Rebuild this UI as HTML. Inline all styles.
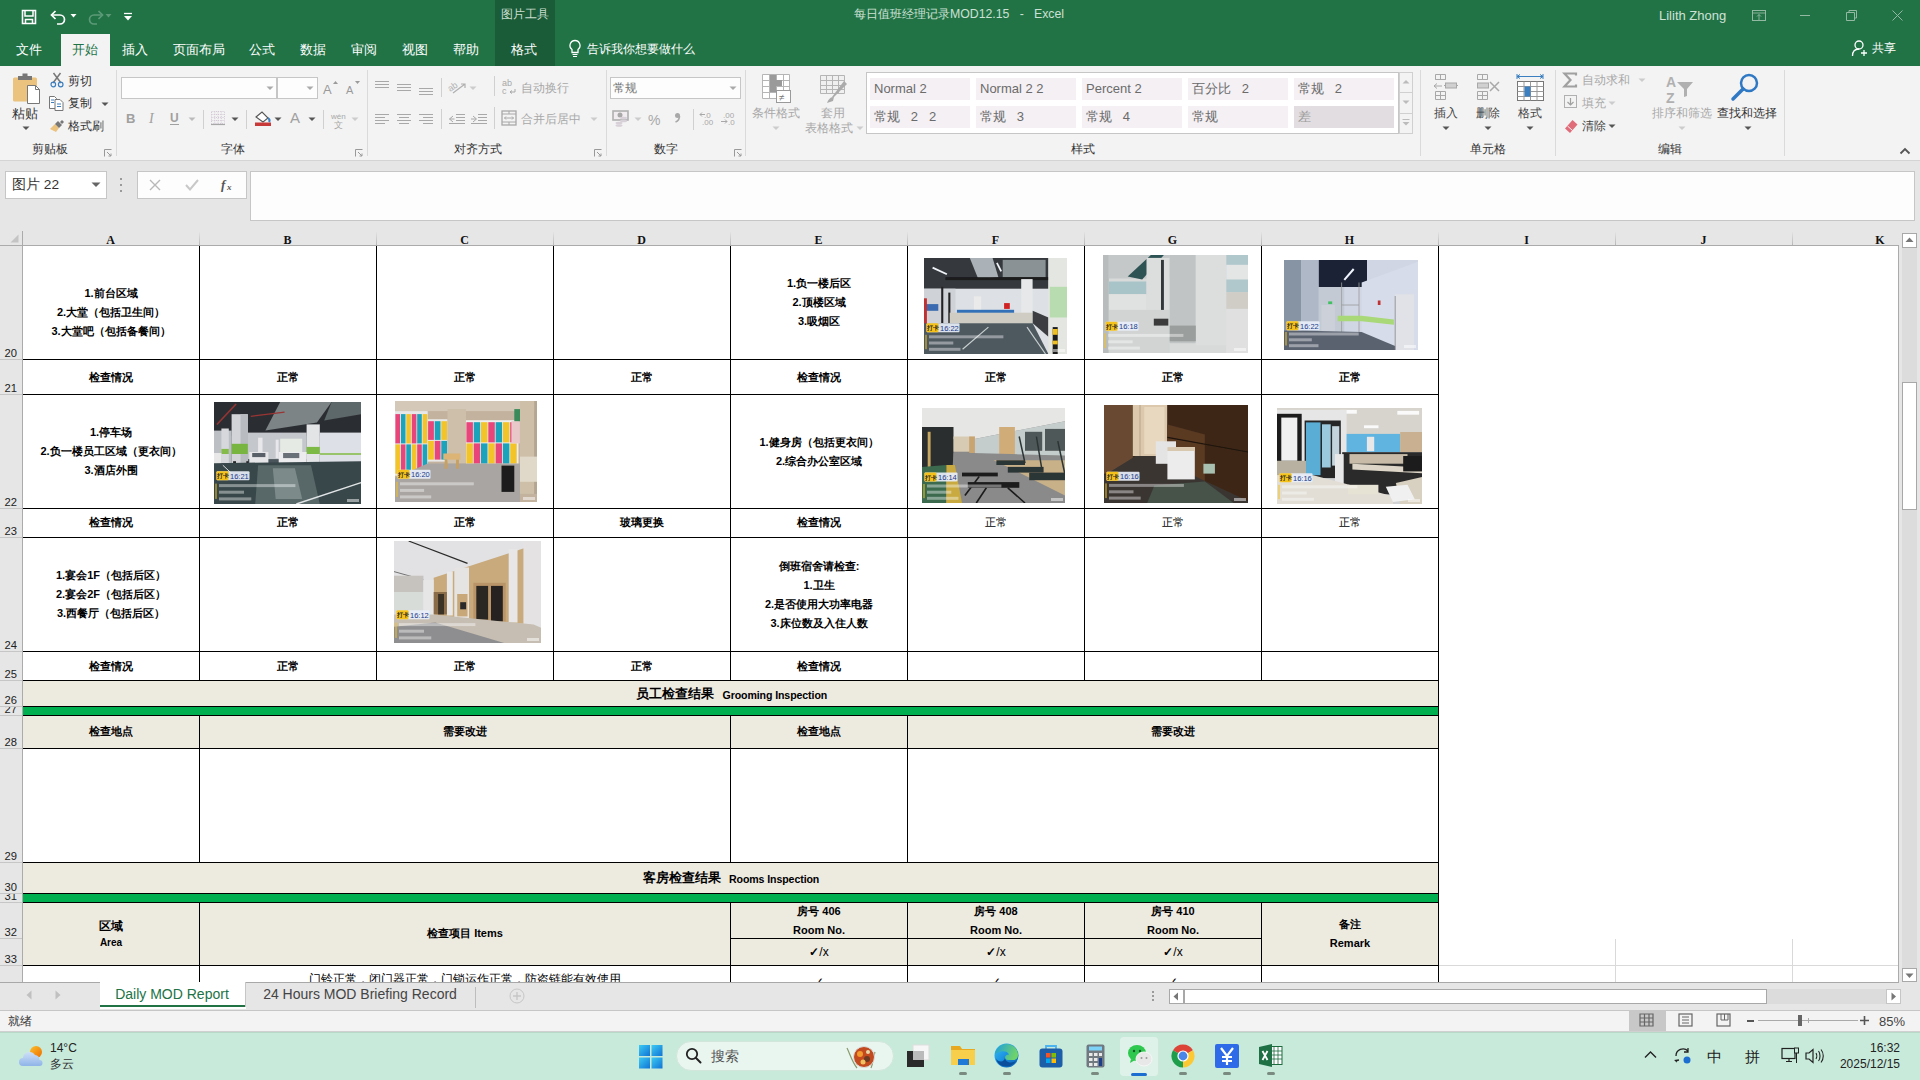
<!DOCTYPE html><html><head><meta charset="utf-8"><style>
html,body{margin:0;padding:0;width:1920px;height:1080px;overflow:hidden;background:#fff}
body>div,body div{position:absolute;box-sizing:border-box}
.t{white-space:nowrap;font-family:"Liberation Sans",sans-serif}
svg{overflow:visible}
</style></head><body>
<div style="left:0px;top:0px;width:1920px;height:66px;background:#217346"></div>
<div style="left:495px;top:0px;width:60px;height:66px;background:#1a5c38"></div>
<div class="t" style="left:225px;width:600px;text-align:center;top:6.0px;font-size:12px;line-height:16px;color:#c9dccf;font-weight:normal;">图片工具</div>
<div class="t" style="left:659px;width:600px;text-align:center;top:6.35px;font-size:12.3px;line-height:16.3px;color:#cde0d4;font-weight:normal;">每日值班经理记录MOD12.15&nbsp;&nbsp;&nbsp;-&nbsp;&nbsp;&nbsp;Excel</div>
<div class="t" style="left:1659px;top:6.5px;font-size:13px;line-height:17px;color:#cfe2d6;font-weight:normal;">Lilith Zhong</div>
<svg style="position:absolute;left:20px;top:8px;" width="18" height="18" viewBox="0 0 18 18"><path d="M2.5 2.5h13v13h-13z" fill="none" stroke="#fff" stroke-width="1.6"/><path d="M5 3v5h8V3" fill="none" stroke="#fff" stroke-width="1.5"/><path d="M5.5 15.5v-4h7v4" fill="none" stroke="#fff" stroke-width="1.5"/></svg>
<svg style="position:absolute;left:49px;top:9px;" width="20" height="16" viewBox="0 0 20 16"><path d="M3 6h8a4.5 4.5 0 0 1 0 9H8" fill="none" stroke="#fff" stroke-width="1.7"/><path d="M6.5 2L2.5 6l4 4" fill="none" stroke="#fff" stroke-width="1.7"/></svg>
<svg style="position:absolute;left:70px;top:13px;" width="8" height="6" viewBox="0 0 8 6"><path d="M0.5 1h6L3.5 4.5z" fill="#fff"/></svg>
<svg style="position:absolute;left:85px;top:9px;" width="20" height="16" viewBox="0 0 20 16"><path d="M17 6H9a4.5 4.5 0 0 0 0 9h3" fill="none" stroke="#5c9a77" stroke-width="1.7"/><path d="M13.5 2l4 4-4 4" fill="none" stroke="#5c9a77" stroke-width="1.7"/></svg>
<svg style="position:absolute;left:105px;top:13px;" width="8" height="6" viewBox="0 0 8 6"><path d="M0.5 1h6L3.5 4.5z" fill="#5c9a77"/></svg>
<svg style="position:absolute;left:123px;top:12px;" width="10" height="10" viewBox="0 0 10 10"><path d="M1 1.5h8" stroke="#fff" stroke-width="1.3"/><path d="M1 4h8L5 8.5z" fill="#fff"/></svg>
<svg style="position:absolute;left:1752px;top:10px;" width="14" height="11" viewBox="0 0 14 11"><rect x="0.5" y="0.5" width="13" height="10" fill="none" stroke="#93b9a2" stroke-width="1"/><path d="M0.5 3h13M7 4.5v6M5 6.5l2-2 2 2" fill="none" stroke="#93b9a2" stroke-width="0.9"/></svg>
<div style="left:1800px;top:15px;width:10px;height:1px;background:#93b9a2"></div>
<svg style="position:absolute;left:1846px;top:10px;" width="11" height="11" viewBox="0 0 11 11"><path d="M3 2.5V0.5h7.5v7.5H8.5M0.5 2.5h8v8h-8z" fill="none" stroke="#93b9a2" stroke-width="1"/></svg>
<svg style="position:absolute;left:1892px;top:10px;" width="11" height="11" viewBox="0 0 11 11"><path d="M0.5 0.5l10 10M10.5 0.5l-10 10" stroke="#93b9a2" stroke-width="1"/></svg>
<div style="left:61px;top:34px;width:49px;height:32px;background:#f3f3f3"></div>
<div class="t" style="left:-271px;width:600px;text-align:center;top:40.5px;font-size:13px;line-height:17px;color:#fff;font-weight:normal;">文件</div>
<div class="t" style="left:-215px;width:600px;text-align:center;top:40.5px;font-size:13px;line-height:17px;color:#217346;font-weight:normal;">开始</div>
<div class="t" style="left:-165px;width:600px;text-align:center;top:40.5px;font-size:13px;line-height:17px;color:#fff;font-weight:normal;">插入</div>
<div class="t" style="left:-101.5px;width:600px;text-align:center;top:40.5px;font-size:13px;line-height:17px;color:#fff;font-weight:normal;">页面布局</div>
<div class="t" style="left:-38px;width:600px;text-align:center;top:40.5px;font-size:13px;line-height:17px;color:#fff;font-weight:normal;">公式</div>
<div class="t" style="left:13px;width:600px;text-align:center;top:40.5px;font-size:13px;line-height:17px;color:#fff;font-weight:normal;">数据</div>
<div class="t" style="left:64px;width:600px;text-align:center;top:40.5px;font-size:13px;line-height:17px;color:#fff;font-weight:normal;">审阅</div>
<div class="t" style="left:115px;width:600px;text-align:center;top:40.5px;font-size:13px;line-height:17px;color:#fff;font-weight:normal;">视图</div>
<div class="t" style="left:166px;width:600px;text-align:center;top:40.5px;font-size:13px;line-height:17px;color:#fff;font-weight:normal;">帮助</div>
<div class="t" style="left:224px;width:600px;text-align:center;top:40.5px;font-size:13px;line-height:17px;color:#fff;font-weight:normal;">格式</div>
<svg style="position:absolute;left:568px;top:39px;" width="14" height="19" viewBox="0 0 14 19"><path d="M7 1.5a5 5 0 0 0-3 9v3h6v-3a5 5 0 0 0-3-9z" fill="none" stroke="#fff" stroke-width="1.3"/><path d="M4.5 15.5h5M5 17.5h4" stroke="#fff" stroke-width="1.2"/></svg>
<div class="t" style="left:587px;top:41.0px;font-size:12px;line-height:16px;color:#fff;font-weight:normal;">告诉我你想要做什么</div>
<svg style="position:absolute;left:1851px;top:39px;" width="18" height="18" viewBox="0 0 18 18"><circle cx="8" cy="6" r="4" fill="none" stroke="#fff" stroke-width="1.3"/><path d="M1.5 17c0-5 3-7 6.5-7" fill="none" stroke="#fff" stroke-width="1.3"/><path d="M13 11v6M10 14h6" stroke="#fff" stroke-width="1.3"/></svg>
<div class="t" style="left:1872px;top:40.0px;font-size:12px;line-height:16px;color:#fff;font-weight:normal;">共享</div>
<div style="left:0px;top:66px;width:1920px;height:94px;background:#f3f3f3"></div>
<div style="left:0px;top:160px;width:1920px;height:1px;background:#d4d4d4"></div>
<div style="left:116px;top:70px;width:1px;height:86px;background:#dadada"></div>
<div style="left:367px;top:70px;width:1px;height:86px;background:#dadada"></div>
<div style="left:606px;top:70px;width:1px;height:86px;background:#dadada"></div>
<div style="left:745px;top:70px;width:1px;height:86px;background:#dadada"></div>
<div style="left:1420px;top:70px;width:1px;height:86px;background:#dadada"></div>
<div style="left:1555px;top:70px;width:1px;height:86px;background:#dadada"></div>
<div style="left:1784px;top:70px;width:1px;height:86px;background:#dadada"></div>
<div class="t" style="left:-250px;width:600px;text-align:center;top:141.0px;font-size:12px;line-height:16px;color:#333;font-weight:normal;">剪贴板</div>
<div class="t" style="left:-67px;width:600px;text-align:center;top:141.0px;font-size:12px;line-height:16px;color:#333;font-weight:normal;">字体</div>
<div class="t" style="left:178px;width:600px;text-align:center;top:141.0px;font-size:12px;line-height:16px;color:#333;font-weight:normal;">对齐方式</div>
<div class="t" style="left:366px;width:600px;text-align:center;top:141.0px;font-size:12px;line-height:16px;color:#333;font-weight:normal;">数字</div>
<div class="t" style="left:783px;width:600px;text-align:center;top:141.0px;font-size:12px;line-height:16px;color:#333;font-weight:normal;">样式</div>
<div class="t" style="left:1188px;width:600px;text-align:center;top:141.0px;font-size:12px;line-height:16px;color:#333;font-weight:normal;">单元格</div>
<div class="t" style="left:1370px;width:600px;text-align:center;top:141.0px;font-size:12px;line-height:16px;color:#333;font-weight:normal;">编辑</div>
<svg style="position:absolute;left:104px;top:149px;" width="8" height="8" viewBox="0 0 8 8"><path d="M0.5 7.5V0.5h7" fill="none" stroke="#999"/><path d="M3 3l4 4M7 4.5V7H4.5" fill="none" stroke="#999"/></svg>
<svg style="position:absolute;left:355px;top:149px;" width="8" height="8" viewBox="0 0 8 8"><path d="M0.5 7.5V0.5h7" fill="none" stroke="#999"/><path d="M3 3l4 4M7 4.5V7H4.5" fill="none" stroke="#999"/></svg>
<svg style="position:absolute;left:594px;top:149px;" width="8" height="8" viewBox="0 0 8 8"><path d="M0.5 7.5V0.5h7" fill="none" stroke="#999"/><path d="M3 3l4 4M7 4.5V7H4.5" fill="none" stroke="#999"/></svg>
<svg style="position:absolute;left:734px;top:149px;" width="8" height="8" viewBox="0 0 8 8"><path d="M0.5 7.5V0.5h7" fill="none" stroke="#999"/><path d="M3 3l4 4M7 4.5V7H4.5" fill="none" stroke="#999"/></svg>
<svg style="position:absolute;left:12px;top:73px;" width="30" height="32" viewBox="0 0 30 32"><rect x="1" y="4.5" width="24" height="24" rx="1.5" fill="#ebc27e"/><rect x="6" y="3" width="14" height="4" fill="#777"/><rect x="10.5" y="0.5" width="5" height="4" fill="#777"/><path d="M15.5 12.5h8l4 4v14h-12z" fill="#fff" stroke="#777"/><path d="M23.5 12.5v4h4" fill="none" stroke="#777"/></svg>
<div class="t" style="left:-275px;width:600px;text-align:center;top:104.5px;font-size:13px;line-height:17px;color:#333;font-weight:normal;">粘贴</div>
<svg style="position:absolute;left:22px;top:126px;" width="8" height="5" viewBox="0 0 8 5"><path d="M0.5 0.5h7L4 4z" fill="#555"/></svg>
<svg style="position:absolute;left:50px;top:72px;" width="14" height="16" viewBox="0 0 14 16"><path d="M3.5 1l7.5 10M10.5 1L3 11" stroke="#777" stroke-width="1.5"/><circle cx="3.3" cy="12.5" r="2.3" fill="none" stroke="#3c7fc0" stroke-width="1.2"/><circle cx="10.7" cy="12.5" r="2.3" fill="none" stroke="#3c7fc0" stroke-width="1.2"/></svg>
<div class="t" style="left:68px;top:73.0px;font-size:12px;line-height:16px;color:#333;font-weight:normal;">剪切</div>
<svg style="position:absolute;left:49px;top:96px;" width="16" height="15" viewBox="0 0 16 15"><path d="M0.5 0.5h5l2 2v10h-7z" fill="#fff" stroke="#777"/><path d="M6 3.5h5l3 3v8H6z" fill="#fff" stroke="#777"/><path d="M2 4h3M2 6.5h3M8 8h4M8 10.5h4" stroke="#3c7fc0"/></svg>
<div class="t" style="left:68px;top:95.0px;font-size:12px;line-height:16px;color:#333;font-weight:normal;">复制</div>
<svg style="position:absolute;left:101px;top:102px;" width="8" height="5" viewBox="0 0 8 5"><path d="M0.5 0.5h7L4 4z" fill="#555"/></svg>
<svg style="position:absolute;left:49px;top:119px;" width="16" height="14" viewBox="0 0 16 14"><path d="M1 10l5-5 4 4-3 4z" fill="#ebc27e"/><path d="M6 5l4 4 3-3-4-4z" fill="#777"/><path d="M11 3l2-2 2 2-2 2z" fill="#777"/></svg>
<div class="t" style="left:68px;top:118.0px;font-size:12px;line-height:16px;color:#333;font-weight:normal;">格式刷</div>
<div style="left:121px;top:77px;width:156px;height:22px;background:#fdfdfd;border:1px solid #c6c6c6;box-sizing:border-box"></div>
<div style="left:277px;top:77px;width:41px;height:22px;background:#fdfdfd;border:1px solid #c6c6c6;box-sizing:border-box"></div>
<svg style="position:absolute;left:266px;top:86px;" width="8" height="5" viewBox="0 0 8 5"><path d="M0.5 0.5h7L4 4z" fill="#aaa"/></svg>
<svg style="position:absolute;left:306px;top:86px;" width="8" height="5" viewBox="0 0 8 5"><path d="M0.5 0.5h7L4 4z" fill="#aaa"/></svg>
<svg style="position:absolute;left:322px;top:80px;" width="18" height="16" viewBox="0 0 18 16"><text x="1" y="14" font-family="Liberation Sans" font-size="13" fill="#9a9a9a">A</text><path d="M11 4l2.5-3 2.5 3z" fill="#9a9a9a"/></svg>
<svg style="position:absolute;left:345px;top:80px;" width="16" height="16" viewBox="0 0 16 16"><text x="1" y="14" font-family="Liberation Sans" font-size="11" fill="#9a9a9a">A</text><path d="M10 1h5l-2.5 3z" fill="#9a9a9a"/></svg>
<svg style="position:absolute;left:124px;top:110px;" width="14" height="16" viewBox="0 0 14 16"><text x="2" y="13" font-family="Liberation Sans" font-weight="bold" font-size="13" fill="#a0a0a0">B</text></svg>
<svg style="position:absolute;left:146px;top:110px;" width="14" height="16" viewBox="0 0 14 16"><text x="3" y="13" font-family="Liberation Serif" font-style="italic" font-size="14" fill="#a0a0a0">I</text></svg>
<svg style="position:absolute;left:168px;top:110px;" width="16" height="16" viewBox="0 0 16 16"><text x="2" y="12" font-family="Liberation Sans" font-weight="bold" font-size="12" fill="#a0a0a0">U</text><path d="M2 14.5h9" stroke="#a0a0a0"/></svg>
<svg style="position:absolute;left:188px;top:117px;" width="8" height="5" viewBox="0 0 8 5"><path d="M0.5 0.5h7L4 4z" fill="#bbb"/></svg>
<div style="left:203px;top:110px;width:1px;height:19px;background:#d0d0d0"></div>
<svg style="position:absolute;left:211px;top:111px;" width="15" height="14" viewBox="0 0 15 14"><path d="M0.5 0.5h13v12h-13zM7 0.5v12M0.5 6.5h13M3.75 0.5v12M10.25 0.5v12M0.5 3.5h13M0.5 9.5h13" fill="none" stroke="#d0c4d4" stroke-dasharray="1 1.2"/><path d="M0 13.5h14" stroke="#a8a8a8" stroke-width="1.2"/></svg>
<svg style="position:absolute;left:231px;top:117px;" width="8" height="5" viewBox="0 0 8 5"><path d="M0.5 0.5h7L4 4z" fill="#555"/></svg>
<div style="left:246px;top:110px;width:1px;height:19px;background:#d0d0d0"></div>
<svg style="position:absolute;left:254px;top:110px;" width="18" height="17" viewBox="0 0 18 17"><path d="M2 7l6-5 6 6-5 4z" fill="#fff" stroke="#555" stroke-width="1.1"/><path d="M14 8c1.5 1 2 2.5 1 4" fill="none" stroke="#3c7fc0" stroke-width="2"/><rect x="1" y="12.5" width="16" height="3.5" fill="#c8393a"/></svg>
<svg style="position:absolute;left:274px;top:117px;" width="8" height="5" viewBox="0 0 8 5"><path d="M0.5 0.5h7L4 4z" fill="#555"/></svg>
<svg style="position:absolute;left:289px;top:110px;" width="14" height="16" viewBox="0 0 14 16"><text x="1" y="13" font-family="Liberation Sans" font-size="15" fill="#a0a0a0">A</text></svg>
<svg style="position:absolute;left:308px;top:117px;" width="8" height="5" viewBox="0 0 8 5"><path d="M0.5 0.5h7L4 4z" fill="#555"/></svg>
<div style="left:323px;top:110px;width:1px;height:19px;background:#d0d0d0"></div>
<svg style="position:absolute;left:331px;top:112px;" width="18" height="18" viewBox="0 0 18 18"><text x="0" y="7" font-family="Liberation Sans" font-size="8" fill="#a8a8a8">wén</text><text x="3" y="16" font-family="Liberation Sans" font-size="9" fill="#a8a8a8">文</text></svg>
<svg style="position:absolute;left:351px;top:117px;" width="8" height="5" viewBox="0 0 8 5"><path d="M0.5 0.5h7L4 4z" fill="#ccc"/></svg>
<svg style="position:absolute;left:374px;top:80px;" width="16" height="10" viewBox="0 0 16 10"><path d="M1 1.5h14M1 4.5h14M1 7.5h14" stroke="#a8a8a8" stroke-width="1"/></svg>
<svg style="position:absolute;left:396px;top:83px;" width="16" height="10" viewBox="0 0 16 10"><path d="M1 1.5h14M1 4.5h14M1 7.5h14" stroke="#a8a8a8"/></svg>
<svg style="position:absolute;left:418px;top:87px;" width="16" height="10" viewBox="0 0 16 10"><path d="M1 1.5h14M1 4.5h14M1 7.5h14" stroke="#a8a8a8"/></svg>
<div style="left:441px;top:78px;width:1px;height:19px;background:#d0d0d0"></div>
<svg style="position:absolute;left:448px;top:79px;" width="20" height="16" viewBox="0 0 20 16"><text x="0" y="10" font-family="Liberation Sans" font-size="9" fill="#b0b0b0" transform="rotate(-35 6 8)">ab</text><path d="M5 14l12-9M13 5h4v4" fill="none" stroke="#b0b0b0" stroke-width="1.2"/></svg>
<svg style="position:absolute;left:469px;top:86px;" width="8" height="5" viewBox="0 0 8 5"><path d="M0.5 0.5h7L4 4z" fill="#ccc"/></svg>
<div style="left:494px;top:76px;width:1px;height:20px;background:#d0d0d0"></div>
<svg style="position:absolute;left:502px;top:79px;" width="16" height="16" viewBox="0 0 16 16"><text x="0" y="7" font-family="Liberation Sans" font-size="9" fill="#a8a8a8">ab</text><text x="0" y="15" font-family="Liberation Sans" font-size="9" fill="#a8a8a8">c</text><path d="M13 10v3H8M10 11.5l-2 1.5 2 1.5" fill="none" stroke="#a8a8a8"/></svg>
<div class="t" style="left:521px;top:80.0px;font-size:12px;line-height:16px;color:#a8a8a8;font-weight:normal;">自动换行</div>
<svg style="position:absolute;left:374px;top:113px;" width="16" height="12" viewBox="0 0 16 12"><path d="M1 1.5h14M1 4.5h10M1 7.5h14M1 10.5h10" stroke="#a8a8a8"/></svg>
<svg style="position:absolute;left:396px;top:113px;" width="16" height="12" viewBox="0 0 16 12"><path d="M1 1.5h14M3 4.5h10M1 7.5h14M3 10.5h10" stroke="#a8a8a8"/></svg>
<svg style="position:absolute;left:418px;top:113px;" width="16" height="12" viewBox="0 0 16 12"><path d="M1 1.5h14M5 4.5h10M1 7.5h14M5 10.5h10" stroke="#a8a8a8"/></svg>
<div style="left:441px;top:109px;width:1px;height:20px;background:#d0d0d0"></div>
<svg style="position:absolute;left:448px;top:113px;" width="18" height="12" viewBox="0 0 18 12"><path d="M8 1.5h9M8 4.5h9M8 7.5h9M1 10.5h16M5 3L1.5 6 5 9M1.5 6h5" fill="none" stroke="#a8a8a8"/></svg>
<svg style="position:absolute;left:470px;top:113px;" width="18" height="12" viewBox="0 0 18 12"><path d="M8 1.5h9M8 4.5h9M8 7.5h9M1 10.5h16M3 3l3.5 3L3 9M1 6h5" fill="none" stroke="#a8a8a8"/></svg>
<div style="left:494px;top:107px;width:1px;height:22px;background:#d0d0d0"></div>
<svg style="position:absolute;left:501px;top:110px;" width="16" height="16" viewBox="0 0 16 16"><rect x="1" y="1" width="14" height="14" fill="none" stroke="#a8a8a8" stroke-width="1.3"/><path d="M1 4h14M1 12h14M8 1v3M8 12v3M3.5 8h9M5 6.5L3.5 8 5 9.5M11 6.5l1.5 1.5-1.5 1.5" fill="none" stroke="#a8a8a8"/></svg>
<div class="t" style="left:521px;top:111.0px;font-size:12px;line-height:16px;color:#a8a8a8;font-weight:normal;">合并后居中</div>
<svg style="position:absolute;left:590px;top:117px;" width="8" height="5" viewBox="0 0 8 5"><path d="M0.5 0.5h7L4 4z" fill="#ccc"/></svg>
<div style="left:610px;top:77px;width:131px;height:22px;background:#fdfdfd;border:1px solid #c6c6c6;box-sizing:border-box"></div>
<div class="t" style="left:613px;top:80.0px;font-size:12px;line-height:16px;color:#777;font-weight:normal;">常规</div>
<svg style="position:absolute;left:729px;top:86px;" width="8" height="5" viewBox="0 0 8 5"><path d="M0.5 0.5h7L4 4z" fill="#aaa"/></svg>
<svg style="position:absolute;left:612px;top:110px;" width="18" height="17" viewBox="0 0 18 17"><rect x="1" y="1" width="15" height="9" fill="#f0ecf0" stroke="#b0b0b0" stroke-width="1.6"/><circle cx="8" cy="5" r="2.5" fill="#a8a8a8"/><ellipse cx="11.5" cy="8" rx="3.5" ry="1.3" fill="#d8d0d8"/><ellipse cx="11.5" cy="11" rx="3.5" ry="1.3" fill="#d8d0d8"/><ellipse cx="7" cy="13" rx="3.5" ry="1.3" fill="#d8d0d8"/><ellipse cx="7" cy="15.5" rx="3.5" ry="1.3" fill="#d8d0d8"/></svg>
<svg style="position:absolute;left:634px;top:117px;" width="8" height="5" viewBox="0 0 8 5"><path d="M0.5 0.5h7L4 4z" fill="#ccc"/></svg>
<div class="t" style="left:648px;top:111.0px;font-size:14px;line-height:18px;color:#a8a8a8;font-weight:normal;">%</div>
<svg style="position:absolute;left:673px;top:112px;" width="8" height="11" viewBox="0 0 8 11"><circle cx="4.5" cy="3.5" r="2.5" fill="#a8a8a8"/><path d="M6.5 4c0 3-1.5 5-4 6" fill="none" stroke="#a8a8a8" stroke-width="1.6"/></svg>
<div style="left:693px;top:109px;width:1px;height:21px;background:#d0d0d0"></div>
<svg style="position:absolute;left:699px;top:110px;" width="18" height="16" viewBox="0 0 18 16"><text x="5" y="8" font-family="Liberation Sans" font-size="8" fill="#a8a8a8">.0</text><text x="3" y="15" font-family="Liberation Sans" font-size="8" fill="#a8a8a8">.00</text><path d="M1 4.5h5M3 2.5l-2 2 2 2" fill="none" stroke="#a8a8a8"/></svg>
<svg style="position:absolute;left:720px;top:110px;" width="18" height="16" viewBox="0 0 18 16"><text x="3" y="8" font-family="Liberation Sans" font-size="8" fill="#a8a8a8">.00</text><text x="8" y="15" font-family="Liberation Sans" font-size="8" fill="#a8a8a8">.0</text><path d="M1 11.5h6M5 9.5l2 2-2 2" fill="none" stroke="#a8a8a8"/></svg>
<svg style="position:absolute;left:762px;top:74px;" width="30" height="32" viewBox="0 0 30 32"><g fill="#fff" stroke="#b5b5b5" stroke-width="1"><path d="M0.5 0.5h27v24h-27z"/></g><path d="M0.5 6.5h27M0.5 12.5h27M0.5 18.5h27M7.5 0.5v24M14.5 0.5v24M21.5 0.5v24" stroke="#b5b5b5"/><path d="M8 1h6v5h6v6h-6v6H8z" fill="#9a9a9a"/><rect x="14.5" y="16.5" width="14" height="12" fill="#fff" stroke="#9a9a9a"/><text x="17" y="27" font-family="Liberation Sans" font-size="10" fill="#777">≠</text></svg>
<div class="t" style="left:476px;width:600px;text-align:center;top:105.0px;font-size:12px;line-height:16px;color:#a8a8a8;font-weight:normal;">条件格式</div>
<svg style="position:absolute;left:772px;top:126px;" width="8" height="5" viewBox="0 0 8 5"><path d="M0.5 0.5h7L4 4z" fill="#ccc"/></svg>
<svg style="position:absolute;left:820px;top:75px;" width="32" height="30" viewBox="0 0 32 30"><path d="M0.5 0.5h24v18h-24z" fill="#f0f0f0" stroke="#b5b5b5"/><path d="M0.5 5.5h24M0.5 10.5h24M0.5 14.5h24M6.5 0.5v18M12.5 0.5v18M18.5 0.5v18" stroke="#b5b5b5"/><path d="M12 22l12-16 3 3-13 13z" fill="#aaa"/><path d="M7 28c2-5 4-6 7-6l-1 4z" fill="#aaa"/></svg>
<div class="t" style="left:533px;width:600px;text-align:center;top:105.0px;font-size:12px;line-height:16px;color:#a8a8a8;font-weight:normal;">套用</div>
<div class="t" style="left:529px;width:600px;text-align:center;top:120.0px;font-size:12px;line-height:16px;color:#a8a8a8;font-weight:normal;">表格格式</div>
<svg style="position:absolute;left:856px;top:126px;" width="8" height="5" viewBox="0 0 8 5"><path d="M0.5 0.5h7L4 4z" fill="#ccc"/></svg>
<div style="left:866px;top:72px;width:533px;height:62px;background:#fff;border:1px solid #c6c6c6;box-sizing:border-box"></div>
<div style="left:870px;top:78px;width:100px;height:22px;background:#f4f0f4"></div>
<div class="t" style="left:874px;top:79.5px;font-size:13px;line-height:17px;color:#6b6b6b;font-weight:normal;">Normal 2</div>
<div style="left:976px;top:78px;width:100px;height:22px;background:#f4f0f4"></div>
<div class="t" style="left:980px;top:79.5px;font-size:13px;line-height:17px;color:#6b6b6b;font-weight:normal;">Normal 2 2</div>
<div style="left:1082px;top:78px;width:100px;height:22px;background:#f4f0f4"></div>
<div class="t" style="left:1086px;top:79.5px;font-size:13px;line-height:17px;color:#6b6b6b;font-weight:normal;">Percent 2</div>
<div style="left:1188px;top:78px;width:100px;height:22px;background:#f4f0f4"></div>
<div class="t" style="left:1192px;top:79.5px;font-size:13px;line-height:17px;color:#6b6b6b;font-weight:normal;">百分比&nbsp;&nbsp;&nbsp;2</div>
<div style="left:1294px;top:78px;width:100px;height:22px;background:#f4f0f4"></div>
<div class="t" style="left:1298px;top:79.5px;font-size:13px;line-height:17px;color:#6b6b6b;font-weight:normal;">常规&nbsp;&nbsp;&nbsp;2</div>
<div style="left:870px;top:106px;width:100px;height:22px;background:#f4f0f4"></div>
<div class="t" style="left:874px;top:107.5px;font-size:13px;line-height:17px;color:#6b6b6b;font-weight:normal;">常规&nbsp;&nbsp;&nbsp;2&nbsp;&nbsp;&nbsp;2</div>
<div style="left:976px;top:106px;width:100px;height:22px;background:#f4f0f4"></div>
<div class="t" style="left:980px;top:107.5px;font-size:13px;line-height:17px;color:#6b6b6b;font-weight:normal;">常规&nbsp;&nbsp;&nbsp;3</div>
<div style="left:1082px;top:106px;width:100px;height:22px;background:#f4f0f4"></div>
<div class="t" style="left:1086px;top:107.5px;font-size:13px;line-height:17px;color:#6b6b6b;font-weight:normal;">常规&nbsp;&nbsp;&nbsp;4</div>
<div style="left:1188px;top:106px;width:100px;height:22px;background:#f4f0f4"></div>
<div class="t" style="left:1192px;top:107.5px;font-size:13px;line-height:17px;color:#6b6b6b;font-weight:normal;">常规</div>
<div style="left:1294px;top:106px;width:100px;height:22px;background:#e1dde0"></div>
<div class="t" style="left:1298px;top:107.5px;font-size:13px;line-height:17px;color:#9c9c9c;font-weight:normal;">差</div>
<div style="left:1399px;top:72px;width:14px;height:62px;background:#f3f3f3;border:1px solid #d0d0d0;box-sizing:border-box"></div>
<div style="left:1399px;top:92px;width:14px;height:1px;background:#d0d0d0"></div>
<div style="left:1399px;top:113px;width:14px;height:1px;background:#d0d0d0"></div>
<svg style="position:absolute;left:1402px;top:79px;" width="8" height="5" viewBox="0 0 8 5"><path d="M0.5 4.5h7L4 1z" fill="#bbb"/></svg>
<svg style="position:absolute;left:1402px;top:100px;" width="8" height="5" viewBox="0 0 8 5"><path d="M0.5 0.5h7L4 4z" fill="#bbb"/></svg>
<svg style="position:absolute;left:1402px;top:119px;" width="8" height="8" viewBox="0 0 8 8"><path d="M0.5 0.5h7" stroke="#bbb"/><path d="M0.5 3h7L4 6.5z" fill="#bbb"/></svg>
<svg style="position:absolute;left:1431px;top:72px;" width="30" height="30" viewBox="0 0 30 30"><g fill="none" stroke="#a8a8a8"><path d="M4.5 2.5h10v5h-10zM4.5 7.5h10M9.5 2.5v5"/><path d="M4.5 19.5h10v8h-10zM4.5 23.5h10M9.5 19.5v8"/></g><path d="M13 13.5h14" stroke="#a8a8a8"/><rect x="14.5" y="11" width="11" height="5" fill="#d0d0d0" stroke="#a8a8a8"/><path d="M3 14h8M6 11.5L3 14l3 2.5" fill="none" stroke="#a8a8a8"/></svg>
<div class="t" style="left:1146px;width:600px;text-align:center;top:105.0px;font-size:12px;line-height:16px;color:#444;font-weight:normal;">插入</div>
<svg style="position:absolute;left:1442px;top:126px;" width="8" height="5" viewBox="0 0 8 5"><path d="M0.5 0.5h7L4 4z" fill="#555"/></svg>
<svg style="position:absolute;left:1473px;top:72px;" width="30" height="30" viewBox="0 0 30 30"><g fill="none" stroke="#a8a8a8"><path d="M4.5 2.5h10v5h-10zM4.5 7.5h10M9.5 2.5v5"/><path d="M4.5 19.5h10v8h-10zM4.5 23.5h10M9.5 19.5v8"/></g><rect x="4.5" y="11" width="11" height="5" fill="#d0d0d0" stroke="#a8a8a8"/><path d="M17 10l9 9M26 10l-9 9" stroke="#a8a8a8" stroke-width="1.5"/></svg>
<div class="t" style="left:1188px;width:600px;text-align:center;top:105.0px;font-size:12px;line-height:16px;color:#444;font-weight:normal;">删除</div>
<svg style="position:absolute;left:1484px;top:126px;" width="8" height="5" viewBox="0 0 8 5"><path d="M0.5 0.5h7L4 4z" fill="#555"/></svg>
<svg style="position:absolute;left:1515px;top:73px;" width="30" height="30" viewBox="0 0 30 30"><path d="M2 3.5h26M2 1v5M28 1v5M5 1.5l-3 2 3 2M25 1.5l3 2-3 2" fill="none" stroke="#3c7fc0"/><rect x="2.5" y="8.5" width="26" height="19" fill="#fff" stroke="#777"/><path d="M2.5 13.5h26M2.5 18.5h26M2.5 23.5h26M9 8.5v19M15.5 8.5v19M22 8.5v19" stroke="#999"/><rect x="9.5" y="13.5" width="6" height="10" fill="#3c7fc0"/></svg>
<div class="t" style="left:1230px;width:600px;text-align:center;top:105.0px;font-size:12px;line-height:16px;color:#444;font-weight:normal;">格式</div>
<svg style="position:absolute;left:1526px;top:126px;" width="8" height="5" viewBox="0 0 8 5"><path d="M0.5 0.5h7L4 4z" fill="#555"/></svg>
<svg style="position:absolute;left:1562px;top:72px;" width="16" height="16" viewBox="0 0 16 16"><path d="M14 3.5V1.5H2.5l6 6.5-6 6.5h11.5v-2" fill="none" stroke="#a0a0a0" stroke-width="2.2"/></svg>
<div class="t" style="left:1582px;top:72.0px;font-size:12px;line-height:16px;color:#a8a8a8;font-weight:normal;">自动求和</div>
<svg style="position:absolute;left:1638px;top:78px;" width="8" height="5" viewBox="0 0 8 5"><path d="M0.5 0.5h7L4 4z" fill="#ccc"/></svg>
<svg style="position:absolute;left:1564px;top:95px;" width="14" height="14" viewBox="0 0 14 14"><rect x="0.5" y="0.5" width="12" height="12" fill="none" stroke="#b0b0b0"/><path d="M6.5 3v7M3.5 7l3 3 3-3" fill="none" stroke="#a0a0a0" stroke-width="1.2"/></svg>
<div class="t" style="left:1582px;top:95.0px;font-size:12px;line-height:16px;color:#a8a8a8;font-weight:normal;">填充</div>
<svg style="position:absolute;left:1608px;top:101px;" width="8" height="5" viewBox="0 0 8 5"><path d="M0.5 0.5h7L4 4z" fill="#ccc"/></svg>
<svg style="position:absolute;left:1564px;top:118px;" width="16" height="15" viewBox="0 0 16 15"><path d="M1 10.5l7.5-8.5 5 4.5-7.5 8.5z" fill="#e06c7a"/><path d="M3.5 8l5 4.5" stroke="#f3f3f3" stroke-width="1"/></svg>
<div class="t" style="left:1582px;top:118.0px;font-size:12px;line-height:16px;color:#444;font-weight:normal;">清除</div>
<svg style="position:absolute;left:1608px;top:124px;" width="8" height="5" viewBox="0 0 8 5"><path d="M0.5 0.5h7L4 4z" fill="#555"/></svg>
<svg style="position:absolute;left:1665px;top:73px;" width="32" height="30" viewBox="0 0 32 30"><text x="1" y="14" font-family="Liberation Sans" font-weight="bold" font-size="14" fill="#b0b0b0">A</text><text x="1" y="30" font-family="Liberation Sans" font-weight="bold" font-size="14" fill="#b0b0b0">Z</text><path d="M12 9h16l-6 7v7l-3 1v-8z" fill="#b0b0b0"/></svg>
<div class="t" style="left:1382px;width:600px;text-align:center;top:105.0px;font-size:12px;line-height:16px;color:#a8a8a8;font-weight:normal;">排序和筛选</div>
<svg style="position:absolute;left:1678px;top:126px;" width="8" height="5" viewBox="0 0 8 5"><path d="M0.5 0.5h7L4 4z" fill="#ccc"/></svg>
<svg style="position:absolute;left:1730px;top:72px;" width="32" height="30" viewBox="0 0 32 30"><circle cx="19" cy="11" r="8" fill="none" stroke="#2f78c4" stroke-width="2.5"/><path d="M13 17L3 27" stroke="#2f78c4" stroke-width="3.5" stroke-linecap="round"/></svg>
<div class="t" style="left:1447px;width:600px;text-align:center;top:105.0px;font-size:12px;line-height:16px;color:#333;font-weight:normal;">查找和选择</div>
<svg style="position:absolute;left:1744px;top:126px;" width="8" height="5" viewBox="0 0 8 5"><path d="M0.5 0.5h7L4 4z" fill="#555"/></svg>
<svg style="position:absolute;left:1899px;top:147px;" width="12" height="8" viewBox="0 0 12 8"><path d="M1.5 6.5l4.5-4.5 4.5 4.5" fill="none" stroke="#555" stroke-width="1.8"/></svg>
<div style="left:0px;top:161px;width:1920px;height:70px;background:#e6e6e6"></div>
<div style="left:5px;top:171px;width:102px;height:28px;background:#fff;border:1px solid #c6c6c6;box-sizing:border-box"></div>
<div class="t" style="left:12px;top:175.65px;font-size:13.7px;line-height:17.7px;color:#333;font-weight:normal;">图片 22</div>
<svg style="position:absolute;left:91px;top:182px;" width="10" height="6" viewBox="0 0 10 6"><path d="M0.5 0.5h9L5 5z" fill="#666"/></svg>
<div style="left:120px;top:178px;width:2px;height:2px;background:#9a9a9a"></div>
<div style="left:120px;top:184px;width:2px;height:2px;background:#9a9a9a"></div>
<div style="left:120px;top:190px;width:2px;height:2px;background:#9a9a9a"></div>
<div style="left:137px;top:171px;width:110px;height:28px;background:#fdfdfd;border:1px solid #c6c6c6;box-sizing:border-box"></div>
<svg style="position:absolute;left:149px;top:179px;" width="12" height="12" viewBox="0 0 12 12"><path d="M1 1l10 10M11 1L1 11" stroke="#b8b8b8" stroke-width="1.4"/></svg>
<svg style="position:absolute;left:185px;top:179px;" width="14" height="12" viewBox="0 0 14 12"><path d="M1 6l4 4.5L13 1" fill="none" stroke="#c8c8c8" stroke-width="2"/></svg>
<svg style="position:absolute;left:220px;top:177px;" width="16" height="16" viewBox="0 0 16 16"><text x="1" y="12" font-family="Liberation Serif" font-style="italic" font-weight="bold" font-size="13" fill="#555">f</text><text x="7" y="13" font-family="Liberation Serif" font-style="italic" font-weight="bold" font-size="9" fill="#555">x</text></svg>
<div style="left:250px;top:171px;width:1665px;height:50px;background:#fdfdfd;border:1px solid #c6c6c6;box-sizing:border-box"></div>
<div style="left:0px;top:231px;width:1900px;height:15px;background:#e6e6e6"></div>
<div style="left:0px;top:245px;width:1899px;height:1px;background:#ababab"></div>
<svg style="position:absolute;left:10px;top:234px;" width="9" height="9" viewBox="0 0 9 9"><path d="M8.5 0.5v8h-8z" fill="#c4c4c4"/></svg>
<div style="left:22px;top:231px;width:1px;height:14px;background:linear-gradient(#e6e6e6,#b8b8b8)"></div>
<div style="left:199px;top:231px;width:1px;height:14px;background:linear-gradient(#e6e6e6,#b8b8b8)"></div>
<div style="left:376px;top:231px;width:1px;height:14px;background:linear-gradient(#e6e6e6,#b8b8b8)"></div>
<div style="left:553px;top:231px;width:1px;height:14px;background:linear-gradient(#e6e6e6,#b8b8b8)"></div>
<div style="left:730px;top:231px;width:1px;height:14px;background:linear-gradient(#e6e6e6,#b8b8b8)"></div>
<div style="left:907px;top:231px;width:1px;height:14px;background:linear-gradient(#e6e6e6,#b8b8b8)"></div>
<div style="left:1084px;top:231px;width:1px;height:14px;background:linear-gradient(#e6e6e6,#b8b8b8)"></div>
<div style="left:1261px;top:231px;width:1px;height:14px;background:linear-gradient(#e6e6e6,#b8b8b8)"></div>
<div style="left:1438px;top:231px;width:1px;height:14px;background:linear-gradient(#e6e6e6,#b8b8b8)"></div>
<div style="left:1615px;top:231px;width:1px;height:14px;background:linear-gradient(#e6e6e6,#b8b8b8)"></div>
<div style="left:1792px;top:231px;width:1px;height:14px;background:linear-gradient(#e6e6e6,#b8b8b8)"></div>
<div class="t" style="left:-189.5px;width:600px;text-align:center;top:232.5px;font-size:12px;line-height:14px;color:#111;font-weight:bold;font-family:'Liberation Serif',serif">A</div>
<div class="t" style="left:-12.5px;width:600px;text-align:center;top:232.5px;font-size:12px;line-height:14px;color:#111;font-weight:bold;font-family:'Liberation Serif',serif">B</div>
<div class="t" style="left:164.5px;width:600px;text-align:center;top:232.5px;font-size:12px;line-height:14px;color:#111;font-weight:bold;font-family:'Liberation Serif',serif">C</div>
<div class="t" style="left:341.5px;width:600px;text-align:center;top:232.5px;font-size:12px;line-height:14px;color:#111;font-weight:bold;font-family:'Liberation Serif',serif">D</div>
<div class="t" style="left:518.5px;width:600px;text-align:center;top:232.5px;font-size:12px;line-height:14px;color:#111;font-weight:bold;font-family:'Liberation Serif',serif">E</div>
<div class="t" style="left:695.5px;width:600px;text-align:center;top:232.5px;font-size:12px;line-height:14px;color:#111;font-weight:bold;font-family:'Liberation Serif',serif">F</div>
<div class="t" style="left:872.5px;width:600px;text-align:center;top:232.5px;font-size:12px;line-height:14px;color:#111;font-weight:bold;font-family:'Liberation Serif',serif">G</div>
<div class="t" style="left:1049.5px;width:600px;text-align:center;top:232.5px;font-size:12px;line-height:14px;color:#111;font-weight:bold;font-family:'Liberation Serif',serif">H</div>
<div class="t" style="left:1226.5px;width:600px;text-align:center;top:232.5px;font-size:12px;line-height:14px;color:#111;font-weight:bold;font-family:'Liberation Serif',serif">I</div>
<div class="t" style="left:1403.5px;width:600px;text-align:center;top:232.5px;font-size:12px;line-height:14px;color:#111;font-weight:bold;font-family:'Liberation Serif',serif">J</div>
<div class="t" style="left:1580px;width:600px;text-align:center;top:232.5px;font-size:12px;line-height:14px;color:#111;font-weight:bold;font-family:'Liberation Serif',serif">K</div>
<div style="left:0px;top:246px;width:22px;height:736px;background:#e6e6e6"></div>
<div style="left:22px;top:231px;width:1px;height:751px;background:#ababab"></div>
<div style="left:0px;top:359px;width:22px;height:1px;background:#c6c6c6"></div>
<div style="left:0;top:247px;width:22px;height:112px;overflow:hidden">
<div class="t" style="left:4.5px;top:100.2px;font-size:11.2px;line-height:13px;color:#222;font-weight:normal;">20</div>
</div>
<div style="left:0px;top:394px;width:22px;height:1px;background:#c6c6c6"></div>
<div style="left:0;top:360px;width:22px;height:34px;overflow:hidden">
<div class="t" style="left:4.5px;top:22.2px;font-size:11.2px;line-height:13px;color:#222;font-weight:normal;">21</div>
</div>
<div style="left:0px;top:508px;width:22px;height:1px;background:#c6c6c6"></div>
<div style="left:0;top:395px;width:22px;height:113px;overflow:hidden">
<div class="t" style="left:4.5px;top:101.2px;font-size:11.2px;line-height:13px;color:#222;font-weight:normal;">22</div>
</div>
<div style="left:0px;top:537px;width:22px;height:1px;background:#c6c6c6"></div>
<div style="left:0;top:509px;width:22px;height:28px;overflow:hidden">
<div class="t" style="left:4.5px;top:16.2px;font-size:11.2px;line-height:13px;color:#222;font-weight:normal;">23</div>
</div>
<div style="left:0px;top:651px;width:22px;height:1px;background:#c6c6c6"></div>
<div style="left:0;top:538px;width:22px;height:113px;overflow:hidden">
<div class="t" style="left:4.5px;top:101.2px;font-size:11.2px;line-height:13px;color:#222;font-weight:normal;">24</div>
</div>
<div style="left:0px;top:680px;width:22px;height:1px;background:#c6c6c6"></div>
<div style="left:0;top:652px;width:22px;height:28px;overflow:hidden">
<div class="t" style="left:4.5px;top:16.2px;font-size:11.2px;line-height:13px;color:#222;font-weight:normal;">25</div>
</div>
<div style="left:0px;top:706px;width:22px;height:1px;background:#c6c6c6"></div>
<div style="left:0;top:681px;width:22px;height:25px;overflow:hidden">
<div class="t" style="left:4.5px;top:13.2px;font-size:11.2px;line-height:13px;color:#222;font-weight:normal;">26</div>
</div>
<div style="left:0px;top:715px;width:22px;height:1px;background:#c6c6c6"></div>
<div style="left:0;top:707px;width:22px;height:8px;overflow:hidden">
<div class="t" style="left:4.5px;top:-3.8px;font-size:11.2px;line-height:13px;color:#222;font-weight:normal;">27</div>
</div>
<div style="left:0px;top:748px;width:22px;height:1px;background:#c6c6c6"></div>
<div style="left:0;top:716px;width:22px;height:32px;overflow:hidden">
<div class="t" style="left:4.5px;top:20.2px;font-size:11.2px;line-height:13px;color:#222;font-weight:normal;">28</div>
</div>
<div style="left:0px;top:862px;width:22px;height:1px;background:#c6c6c6"></div>
<div style="left:0;top:749px;width:22px;height:113px;overflow:hidden">
<div class="t" style="left:4.5px;top:101.2px;font-size:11.2px;line-height:13px;color:#222;font-weight:normal;">29</div>
</div>
<div style="left:0px;top:893px;width:22px;height:1px;background:#c6c6c6"></div>
<div style="left:0;top:863px;width:22px;height:30px;overflow:hidden">
<div class="t" style="left:4.5px;top:18.2px;font-size:11.2px;line-height:13px;color:#222;font-weight:normal;">30</div>
</div>
<div style="left:0px;top:902px;width:22px;height:1px;background:#c6c6c6"></div>
<div style="left:0;top:894px;width:22px;height:8px;overflow:hidden">
<div class="t" style="left:4.5px;top:-3.8px;font-size:11.2px;line-height:13px;color:#222;font-weight:normal;">31</div>
</div>
<div style="left:0px;top:938px;width:22px;height:1px;background:#c6c6c6"></div>
<div style="left:0;top:903px;width:22px;height:35px;overflow:hidden">
<div class="t" style="left:4.5px;top:23.2px;font-size:11.2px;line-height:13px;color:#222;font-weight:normal;">32</div>
</div>
<div style="left:0px;top:965px;width:22px;height:1px;background:#c6c6c6"></div>
<div style="left:0;top:939px;width:22px;height:26px;overflow:hidden">
<div class="t" style="left:4.5px;top:14.2px;font-size:11.2px;line-height:13px;color:#222;font-weight:normal;">33</div>
</div>
<div style="left:0px;top:982px;width:22px;height:1px;background:#c6c6c6"></div>
<div style="left:23px;top:246px;width:1876px;height:736px;background:#fff"></div>
<div style="left:1898px;top:245px;width:1px;height:737px;background:#ababab"></div>
<div style="left:23px;top:681px;width:1415px;height:25px;background:#edeae0"></div>
<div style="left:23px;top:707px;width:1415px;height:8px;background:#00b050"></div>
<div style="left:23px;top:716px;width:1415px;height:32px;background:#edeae0"></div>
<div style="left:23px;top:863px;width:1415px;height:30px;background:#edeae0"></div>
<div style="left:23px;top:894px;width:1415px;height:8px;background:#00b050"></div>
<div style="left:23px;top:903px;width:1415px;height:62px;background:#edeae0"></div>
<div style="left:1615px;top:939px;width:1px;height:43px;background:#d9d9d9"></div>
<div style="left:1792px;top:939px;width:1px;height:43px;background:#d9d9d9"></div>
<div style="left:1439px;top:965px;width:459px;height:1px;background:#d9d9d9"></div>
<div style="left:23px;top:359px;width:1416px;height:1px;background:#000"></div>
<div style="left:23px;top:394px;width:1416px;height:1px;background:#000"></div>
<div style="left:23px;top:508px;width:1416px;height:1px;background:#000"></div>
<div style="left:23px;top:537px;width:1416px;height:1px;background:#000"></div>
<div style="left:23px;top:651px;width:1416px;height:1px;background:#000"></div>
<div style="left:23px;top:680px;width:1416px;height:1px;background:#000"></div>
<div style="left:23px;top:706px;width:1416px;height:1px;background:#000"></div>
<div style="left:23px;top:715px;width:1416px;height:1px;background:#000"></div>
<div style="left:23px;top:748px;width:1416px;height:1px;background:#000"></div>
<div style="left:23px;top:862px;width:1416px;height:1px;background:#000"></div>
<div style="left:23px;top:893px;width:1416px;height:1px;background:#000"></div>
<div style="left:23px;top:902px;width:1416px;height:1px;background:#000"></div>
<div style="left:23px;top:965px;width:1416px;height:1px;background:#000"></div>
<div style="left:730px;top:938px;width:532px;height:1px;background:#000"></div>
<div style="left:199px;top:246px;width:1px;height:435px;background:#000"></div>
<div style="left:376px;top:246px;width:1px;height:435px;background:#000"></div>
<div style="left:553px;top:246px;width:1px;height:435px;background:#000"></div>
<div style="left:730px;top:246px;width:1px;height:435px;background:#000"></div>
<div style="left:907px;top:246px;width:1px;height:435px;background:#000"></div>
<div style="left:1084px;top:246px;width:1px;height:435px;background:#000"></div>
<div style="left:1261px;top:246px;width:1px;height:435px;background:#000"></div>
<div style="left:199px;top:715px;width:1px;height:148px;background:#000"></div>
<div style="left:730px;top:715px;width:1px;height:148px;background:#000"></div>
<div style="left:907px;top:715px;width:1px;height:148px;background:#000"></div>
<div style="left:199px;top:902px;width:1px;height:81px;background:#000"></div>
<div style="left:730px;top:902px;width:1px;height:81px;background:#000"></div>
<div style="left:907px;top:902px;width:1px;height:81px;background:#000"></div>
<div style="left:1084px;top:902px;width:1px;height:81px;background:#000"></div>
<div style="left:1261px;top:902px;width:1px;height:81px;background:#000"></div>
<div style="left:1438px;top:246px;width:1px;height:737px;background:#000"></div>
<div class="t" style="left:-189.0px;width:600px;text-align:center;top:285.5px;font-size:11px;line-height:15px;color:#000;font-weight:bold;">1.前台区域</div>
<div class="t" style="left:-189.0px;width:600px;text-align:center;top:304.5px;font-size:11px;line-height:15px;color:#000;font-weight:bold;">2.大堂（包括卫生间）</div>
<div class="t" style="left:-189.0px;width:600px;text-align:center;top:323.5px;font-size:11px;line-height:15px;color:#000;font-weight:bold;">3.大堂吧（包括备餐间）</div>
<div class="t" style="left:519.0px;width:600px;text-align:center;top:275.5px;font-size:11px;line-height:15px;color:#000;font-weight:bold;">1.负一楼后区</div>
<div class="t" style="left:519.0px;width:600px;text-align:center;top:294.5px;font-size:11px;line-height:15px;color:#000;font-weight:bold;">2.顶楼区域</div>
<div class="t" style="left:519.0px;width:600px;text-align:center;top:313.5px;font-size:11px;line-height:15px;color:#000;font-weight:bold;">3.吸烟区</div>
<div class="t" style="left:-189.0px;width:600px;text-align:center;top:369.5px;font-size:11px;line-height:15px;color:#000;font-weight:bold;">检查情况</div>
<div class="t" style="left:-12.0px;width:600px;text-align:center;top:369.5px;font-size:11px;line-height:15px;color:#000;font-weight:bold;">正常</div>
<div class="t" style="left:165.0px;width:600px;text-align:center;top:369.5px;font-size:11px;line-height:15px;color:#000;font-weight:bold;">正常</div>
<div class="t" style="left:342.0px;width:600px;text-align:center;top:369.5px;font-size:11px;line-height:15px;color:#000;font-weight:bold;">正常</div>
<div class="t" style="left:519.0px;width:600px;text-align:center;top:369.5px;font-size:11px;line-height:15px;color:#000;font-weight:bold;">检查情况</div>
<div class="t" style="left:696.0px;width:600px;text-align:center;top:369.5px;font-size:11px;line-height:15px;color:#000;font-weight:bold;">正常</div>
<div class="t" style="left:873.0px;width:600px;text-align:center;top:369.5px;font-size:11px;line-height:15px;color:#000;font-weight:bold;">正常</div>
<div class="t" style="left:1050.0px;width:600px;text-align:center;top:369.5px;font-size:11px;line-height:15px;color:#000;font-weight:bold;">正常</div>
<div class="t" style="left:-189.0px;width:600px;text-align:center;top:424.5px;font-size:11px;line-height:15px;color:#000;font-weight:bold;">1.停车场</div>
<div class="t" style="left:-189.0px;width:600px;text-align:center;top:443.5px;font-size:11px;line-height:15px;color:#000;font-weight:bold;">2.负一楼员工区域（更衣间）</div>
<div class="t" style="left:-189.0px;width:600px;text-align:center;top:462.5px;font-size:11px;line-height:15px;color:#000;font-weight:bold;">3.酒店外围</div>
<div class="t" style="left:519.0px;width:600px;text-align:center;top:434.5px;font-size:11px;line-height:15px;color:#000;font-weight:bold;">1.健身房（包括更衣间）</div>
<div class="t" style="left:519.0px;width:600px;text-align:center;top:453.5px;font-size:11px;line-height:15px;color:#000;font-weight:bold;">2.综合办公室区域</div>
<div class="t" style="left:-189.0px;width:600px;text-align:center;top:514.5px;font-size:11px;line-height:15px;color:#000;font-weight:bold;">检查情况</div>
<div class="t" style="left:-12.0px;width:600px;text-align:center;top:514.5px;font-size:11px;line-height:15px;color:#000;font-weight:bold;">正常</div>
<div class="t" style="left:165.0px;width:600px;text-align:center;top:514.5px;font-size:11px;line-height:15px;color:#000;font-weight:bold;">正常</div>
<div class="t" style="left:342.0px;width:600px;text-align:center;top:514.5px;font-size:11px;line-height:15px;color:#000;font-weight:bold;">玻璃更换</div>
<div class="t" style="left:519.0px;width:600px;text-align:center;top:514.5px;font-size:11px;line-height:15px;color:#000;font-weight:bold;">检查情况</div>
<div class="t" style="left:696.0px;width:600px;text-align:center;top:514.5px;font-size:11px;line-height:15px;color:#000;font-weight:normal;">正常</div>
<div class="t" style="left:873.0px;width:600px;text-align:center;top:514.5px;font-size:11px;line-height:15px;color:#000;font-weight:normal;">正常</div>
<div class="t" style="left:1050.0px;width:600px;text-align:center;top:514.5px;font-size:11px;line-height:15px;color:#000;font-weight:normal;">正常</div>
<div class="t" style="left:-189.0px;width:600px;text-align:center;top:567.5px;font-size:11px;line-height:15px;color:#000;font-weight:bold;">1.宴会1F（包括后区）</div>
<div class="t" style="left:-189.0px;width:600px;text-align:center;top:586.5px;font-size:11px;line-height:15px;color:#000;font-weight:bold;">2.宴会2F（包括后区）</div>
<div class="t" style="left:-189.0px;width:600px;text-align:center;top:605.5px;font-size:11px;line-height:15px;color:#000;font-weight:bold;">3.西餐厅（包括后区）</div>
<div class="t" style="left:519.0px;width:600px;text-align:center;top:558.5px;font-size:11px;line-height:15px;color:#000;font-weight:bold;">倒班宿舍请检查:</div>
<div class="t" style="left:519.0px;width:600px;text-align:center;top:577.5px;font-size:11px;line-height:15px;color:#000;font-weight:bold;">1.卫生</div>
<div class="t" style="left:519.0px;width:600px;text-align:center;top:596.5px;font-size:11px;line-height:15px;color:#000;font-weight:bold;">2.是否使用大功率电器</div>
<div class="t" style="left:519.0px;width:600px;text-align:center;top:615.5px;font-size:11px;line-height:15px;color:#000;font-weight:bold;">3.床位数及入住人数</div>
<div class="t" style="left:-189.0px;width:600px;text-align:center;top:658.5px;font-size:11px;line-height:15px;color:#000;font-weight:bold;">检查情况</div>
<div class="t" style="left:-12.0px;width:600px;text-align:center;top:658.5px;font-size:11px;line-height:15px;color:#000;font-weight:bold;">正常</div>
<div class="t" style="left:165.0px;width:600px;text-align:center;top:658.5px;font-size:11px;line-height:15px;color:#000;font-weight:bold;">正常</div>
<div class="t" style="left:342.0px;width:600px;text-align:center;top:658.5px;font-size:11px;line-height:15px;color:#000;font-weight:bold;">正常</div>
<div class="t" style="left:519.0px;width:600px;text-align:center;top:658.5px;font-size:11px;line-height:15px;color:#000;font-weight:bold;">检查情况</div>
<div class="t" style="left:375px;width:600px;text-align:center;top:686.0px;font-size:13px;line-height:16px;color:#000;font-weight:bold;">员工检查结果</div>
<div class="t" style="left:722.5px;top:687.5px;font-size:10.6px;line-height:14px;color:#000;font-weight:bold;letter-spacing:-0.1px">Grooming Inspection</div>
<div class="t" style="left:-189.0px;width:600px;text-align:center;top:723.5px;font-size:11px;line-height:15px;color:#000;font-weight:bold;">检查地点</div>
<div class="t" style="left:165.0px;width:600px;text-align:center;top:723.5px;font-size:11px;line-height:15px;color:#000;font-weight:bold;">需要改进</div>
<div class="t" style="left:519.0px;width:600px;text-align:center;top:723.5px;font-size:11px;line-height:15px;color:#000;font-weight:bold;">检查地点</div>
<div class="t" style="left:873.0px;width:600px;text-align:center;top:723.5px;font-size:11px;line-height:15px;color:#000;font-weight:bold;">需要改进</div>
<div class="t" style="left:382px;width:600px;text-align:center;top:870.0px;font-size:13px;line-height:16px;color:#000;font-weight:bold;">客房检查结果</div>
<div class="t" style="left:729px;top:871.5px;font-size:10.6px;line-height:14px;color:#000;font-weight:bold;letter-spacing:-0.1px">Rooms Inspection</div>
<div class="t" style="left:-189.0px;width:600px;text-align:center;top:918.5px;font-size:12px;line-height:15px;color:#000;font-weight:bold;">区域</div>
<div class="t" style="left:-189.0px;width:600px;text-align:center;top:934.5px;font-size:10px;line-height:15px;color:#000;font-weight:bold;">Area</div>
<div class="t" style="left:165.0px;width:600px;text-align:center;top:925.5px;font-size:11px;line-height:15px;color:#000;font-weight:bold;">检查项目 Items</div>
<div class="t" style="left:519.0px;width:600px;text-align:center;top:903.5px;font-size:11px;line-height:15px;color:#000;font-weight:bold;">房号 406</div>
<div class="t" style="left:519.0px;width:600px;text-align:center;top:922.5px;font-size:11px;line-height:15px;color:#000;font-weight:bold;">Room No.</div>
<div class="t" style="left:519.0px;width:600px;text-align:center;top:944.5px;font-size:12px;line-height:15px;color:#000;font-weight:bold;">✓<span style="font-weight:normal">/x</span></div>
<div class="t" style="left:696.0px;width:600px;text-align:center;top:903.5px;font-size:11px;line-height:15px;color:#000;font-weight:bold;">房号 408</div>
<div class="t" style="left:696.0px;width:600px;text-align:center;top:922.5px;font-size:11px;line-height:15px;color:#000;font-weight:bold;">Room No.</div>
<div class="t" style="left:696.0px;width:600px;text-align:center;top:944.5px;font-size:12px;line-height:15px;color:#000;font-weight:bold;">✓<span style="font-weight:normal">/x</span></div>
<div class="t" style="left:873.0px;width:600px;text-align:center;top:903.5px;font-size:11px;line-height:15px;color:#000;font-weight:bold;">房号 410</div>
<div class="t" style="left:873.0px;width:600px;text-align:center;top:922.5px;font-size:11px;line-height:15px;color:#000;font-weight:bold;">Room No.</div>
<div class="t" style="left:873.0px;width:600px;text-align:center;top:944.5px;font-size:12px;line-height:15px;color:#000;font-weight:bold;">✓<span style="font-weight:normal">/x</span></div>
<div class="t" style="left:1050.0px;width:600px;text-align:center;top:916.5px;font-size:11px;line-height:15px;color:#000;font-weight:bold;">备注</div>
<div class="t" style="left:1050.0px;width:600px;text-align:center;top:935.5px;font-size:11px;line-height:15px;color:#000;font-weight:bold;">Remark</div>
<div style="left:23px;top:966px;width:1875px;height:16px;overflow:hidden">
<div class="t" style="left:176px;width:531px;text-align:center;top:6px;font-size:12px;line-height:15px">门铃正常，闭门器正常，门锁运作正常，防盗链能有效使用</div>
<div class="t" style="left:745.5px;width:100px;text-align:center;top:9px;font-size:12px;line-height:15px">✓</div>
<div class="t" style="left:922.5px;width:100px;text-align:center;top:9px;font-size:12px;line-height:15px">✓</div>
<div class="t" style="left:1099.5px;width:100px;text-align:center;top:9px;font-size:12px;line-height:15px">✓</div>
</div>
<div style="left:1899px;top:231px;width:21px;height:751px;background:#e6e6e6"></div>
<div style="left:1902px;top:248px;width:15px;height:720px;background:#dcdcdc"></div>
<div style="left:1902px;top:233px;width:15px;height:15px;background:#fff;border:1px solid #a8a8a8;box-sizing:border-box"></div>
<svg style="position:absolute;left:1905px;top:237px;" width="9" height="6" viewBox="0 0 9 6"><path d="M0.5 5h8L4.5 0.5z" fill="#777"/></svg>
<div style="left:1902px;top:968px;width:15px;height:14px;background:#fff;border:1px solid #a8a8a8;box-sizing:border-box"></div>
<svg style="position:absolute;left:1905px;top:973px;" width="9" height="6" viewBox="0 0 9 6"><path d="M0.5 0.5h8L4.5 5z" fill="#777"/></svg>
<div style="left:1902px;top:382px;width:15px;height:128px;background:#fff;border:1px solid #a8a8a8;box-sizing:border-box"></div>
<div style="left:0px;top:982px;width:1920px;height:28px;background:#e6e6e6"></div>
<div style="left:0px;top:982px;width:1899px;height:1px;background:#a8a8a8"></div>
<div style="left:0px;top:1010px;width:1920px;height:1px;background:#c6c6c6"></div>
<svg style="position:absolute;left:26px;top:990px;" width="6" height="10" viewBox="0 0 6 10"><path d="M5.5 0.5v9L0.5 5z" fill="#c0c0c0"/></svg>
<svg style="position:absolute;left:55px;top:990px;" width="6" height="10" viewBox="0 0 6 10"><path d="M0.5 0.5v9L5.5 5z" fill="#c0c0c0"/></svg>
<div style="left:100px;top:982px;width:146px;height:27px;background:#fff"></div>
<div style="left:100px;top:1005px;width:146px;height:2px;background:#217346"></div>
<div style="left:245px;top:982px;width:1px;height:25px;background:#c6c6c6"></div>
<div class="t" style="left:-128px;width:600px;text-align:center;top:985.0px;font-size:14px;line-height:18px;color:#217346;font-weight:normal;">Daily MOD Report</div>
<div class="t" style="left:60px;width:600px;text-align:center;top:985.0px;font-size:14px;line-height:18px;color:#444;font-weight:normal;">24 Hours MOD Briefing Record</div>
<div style="left:475px;top:987px;width:1px;height:21px;background:#bdbdbd"></div>
<svg style="position:absolute;left:509px;top:988px;" width="16" height="16" viewBox="0 0 16 16"><circle cx="8" cy="8" r="7" fill="none" stroke="#c6c6c6"/><path d="M8 4v8M4 8h8" stroke="#c6c6c6" stroke-width="1.3"/></svg>
<div style="left:1152px;top:991px;width:2px;height:2px;background:#9a9a9a"></div>
<div style="left:1152px;top:995px;width:2px;height:2px;background:#9a9a9a"></div>
<div style="left:1152px;top:999px;width:2px;height:2px;background:#9a9a9a"></div>
<div style="left:1169px;top:989px;width:717px;height:15px;background:#dcdcdc"></div>
<div style="left:1169px;top:989px;width:15px;height:15px;background:#fff;border:1px solid #a8a8a8;box-sizing:border-box"></div>
<svg style="position:absolute;left:1173px;top:992px;" width="6" height="9" viewBox="0 0 6 9"><path d="M5 0.5v8L0.5 4.5z" fill="#777"/></svg>
<div style="left:1184px;top:989px;width:583px;height:15px;background:#fff;border:1px solid #a8a8a8;box-sizing:border-box"></div>
<div style="left:1886px;top:989px;width:15px;height:15px;background:#fff;border:1px solid #c6c6c6;box-sizing:border-box"></div>
<svg style="position:absolute;left:1891px;top:992px;" width="6" height="9" viewBox="0 0 6 9"><path d="M0.5 0.5v8L5 4.5z" fill="#777"/></svg>
<div style="left:0px;top:1011px;width:1920px;height:21px;background:#f3f3f3"></div>
<div style="left:0px;top:1031px;width:1920px;height:1px;background:#d0d0d0"></div>
<div class="t" style="left:8px;top:1013.0px;font-size:12px;line-height:16px;color:#333;font-weight:normal;">就绪</div>
<div style="left:1629px;top:1010px;width:37px;height:21px;background:#c8c8c8"></div>
<svg style="position:absolute;left:1639px;top:1013px;" width="16" height="15" viewBox="0 0 16 15"><path d="M1 1h13v12H1zM1 5h13M1 9h13M5.5 1v12M10 1v12" fill="none" stroke="#666" stroke-width="1.2"/></svg>
<svg style="position:absolute;left:1678px;top:1013px;" width="16" height="15" viewBox="0 0 16 15"><rect x="1" y="1" width="13" height="12" fill="none" stroke="#666" stroke-width="1.2"/><path d="M4 4h7M4 7h7M4 10h7" stroke="#666"/></svg>
<svg style="position:absolute;left:1716px;top:1013px;" width="16" height="15" viewBox="0 0 16 15"><rect x="1" y="1" width="13" height="12" fill="none" stroke="#666" stroke-width="1.2"/><path d="M5 1v6h7V1M8.5 1v6" fill="none" stroke="#666"/></svg>
<div style="left:1747px;top:1020px;width:7px;height:2px;background:#555"></div>
<div style="left:1758px;top:1020px;width:100px;height:1px;background:#aaa"></div>
<div style="left:1798px;top:1015px;width:4px;height:11px;background:#666"></div>
<div style="left:1808px;top:1018px;width:1px;height:5px;background:#aaa"></div>
<svg style="position:absolute;left:1860px;top:1016px;" width="9" height="9" viewBox="0 0 9 9"><path d="M4.5 0v9M0 4.5h9" stroke="#555" stroke-width="1.6"/></svg>
<div class="t" style="left:1879px;top:1012.5px;font-size:13px;line-height:17px;color:#444;font-weight:normal;">85%</div>
<div style="left:0px;top:1032px;width:1920px;height:48px;background:#c8eadb"></div>
<div style="left:0px;top:1032px;width:1920px;height:1px;background:#b8d8c8"></div>
<svg style="position:absolute;left:18px;top:1045px;" width="28" height="23" viewBox="0 0 28 23"><defs><linearGradient id="sg" x1="0" y1="0" x2="1" y2="1"><stop offset="0" stop-color="#fbc02d"/><stop offset="1" stop-color="#ef6c00"/></linearGradient><linearGradient id="cg" x1="0" y1="0" x2="0" y2="1"><stop offset="0" stop-color="#cfe0f8"/><stop offset="1" stop-color="#8fb4e8"/></linearGradient></defs><circle cx="18" cy="7" r="6" fill="url(#sg)"/><path d="M5 21a4 4 0 0 1 0-8a6.5 6.5 0 0 1 12-3a5 5 0 0 1 4.5 5a3 3 0 0 1 0 6z" fill="url(#cg)"/></svg>
<div class="t" style="left:50px;top:1040.0px;font-size:12px;line-height:16px;color:#222;font-weight:normal;">14°C</div>
<div class="t" style="left:50px;top:1056.0px;font-size:12px;line-height:16px;color:#333;font-weight:normal;">多云</div>
<svg style="position:absolute;left:639px;top:1045px;" width="24" height="24" viewBox="0 0 24 24"><defs><linearGradient id="wg" x1="0" y1="0" x2="1" y2="1"><stop offset="0" stop-color="#3ccbf4"/><stop offset="1" stop-color="#1173d4"/></linearGradient></defs><rect x="0" y="0" width="11" height="11" fill="url(#wg)"/><rect x="12.5" y="0" width="11" height="11" fill="url(#wg)"/><rect x="0" y="12.5" width="11" height="11" fill="url(#wg)"/><rect x="12.5" y="12.5" width="11" height="11" fill="url(#wg)"/></svg>
<div style="left:676px;top:1041px;width:218px;height:30px;background:#e9f6f0;border:1px solid #d3e6dc;border-radius:15px;box-sizing:border-box"></div>
<svg style="position:absolute;left:685px;top:1047px;" width="18" height="18" viewBox="0 0 18 18"><circle cx="7" cy="7" r="5.2" fill="none" stroke="#222" stroke-width="1.8"/><path d="M11 11l4.5 4.5" stroke="#222" stroke-width="2" stroke-linecap="round"/></svg>
<div class="t" style="left:711px;top:1047.0px;font-size:14px;line-height:18px;color:#555;font-weight:normal;">搜索</div>
<svg style="position:absolute;left:843px;top:1044px;" width="42" height="26" viewBox="0 0 42 26"><path d="M4 4c3 6 5 14 10 20M32 8c-2 6-2 12-4 16" stroke="#8a9a6a" fill="none" stroke-width="1.2"/><circle cx="21" cy="13" r="10.5" fill="#c34a1f" stroke="#ddd"/><circle cx="17" cy="10" r="3" fill="#f29a2e"/><circle cx="24" cy="15" r="3" fill="#6b3a22"/><circle cx="20" cy="18" r="2.5" fill="#f0c060"/><circle cx="25" cy="8" r="2" fill="#e8d8a8"/></svg>
<svg style="position:absolute;left:906px;top:1044px;" width="24" height="24" viewBox="0 0 24 24"><rect x="7" y="1" width="16" height="15" fill="#f6f6f6" stroke="#ddd"/><rect x="1" y="7" width="17" height="16" fill="#2a2a2a"/><rect x="7" y="7" width="11" height="9" fill="#bbb"/></svg>
<svg style="position:absolute;left:950px;top:1044px;" width="26" height="22" viewBox="0 0 26 22"><path d="M1 2h9l2 3h13v16H1z" fill="#e8a920"/><rect x="1" y="6" width="24" height="15" fill="#f7cf4a"/><rect x="8" y="15" width="11" height="6" fill="#1e7ad6"/></svg>
<div style="left:959px;top:1072px;width:8px;height:3px;background:#7a8a80;border-radius:2px"></div>
<svg style="position:absolute;left:994px;top:1043px;" width="26" height="25" viewBox="0 0 26 25"><defs><linearGradient id="eg" x1="0" y1="0" x2="1" y2="1"><stop offset="0" stop-color="#35c1f1"/><stop offset="0.5" stop-color="#1a8fe0"/><stop offset="1" stop-color="#0c5bb0"/></linearGradient></defs><defs><linearGradient id="eg2" x1="0" y1="0" x2="1" y2="0.3"><stop offset="0" stop-color="#1b9de2"/><stop offset="1" stop-color="#6fd36a"/></linearGradient></defs><circle cx="12.5" cy="12.5" r="12" fill="url(#eg)"/><path d="M1 11C2 5 7 1 12.5 1 19 1 24 6 24 12c0 3-2 5-5 5h-5c-2 0-3-1-3-2.5 0-2 2-3 4-3-1-3-5-4-8-3C4 9.5 2 10.5 1 11z" fill="url(#eg2)"/><path d="M11 14.5c0 3 3 5 6 5 2 0 4-1 5-2-2 4-6 6-10 6-5 0-9-3-10-8 1 2 3 3 5 3 2 0 4-2 4-4z" fill="#0b4f9c"/></svg>
<div style="left:1003px;top:1072px;width:8px;height:3px;background:#7a8a80;border-radius:2px"></div>
<svg style="position:absolute;left:1039px;top:1044px;" width="24" height="24" viewBox="0 0 24 24"><path d="M7 5V2h10v3" fill="none" stroke="#4ab3f0" stroke-width="1.8"/><rect x="0.5" y="4.5" width="23" height="19" rx="3" fill="#1d5ea8"/><rect x="7" y="9" width="4.5" height="4.5" fill="#f35325"/><rect x="12.5" y="9" width="4.5" height="4.5" fill="#81bc06"/><rect x="7" y="14.5" width="4.5" height="4.5" fill="#05a6f0"/><rect x="12.5" y="14.5" width="4.5" height="4.5" fill="#ffba08"/></svg>
<svg style="position:absolute;left:1086px;top:1044px;" width="19" height="24" viewBox="0 0 19 24"><rect x="0.5" y="0.5" width="18" height="23" rx="2" fill="#707880"/><rect x="3" y="2.5" width="13" height="4" fill="#7dd3f7"/><g fill="#e8e8e8"><rect x="3" y="9" width="3.5" height="3"/><rect x="8" y="9" width="3.5" height="3"/><rect x="13" y="9" width="3" height="3"/><rect x="3" y="14" width="3.5" height="3"/><rect x="8" y="14" width="3.5" height="3"/><rect x="3" y="19" width="3.5" height="3"/><rect x="8" y="19" width="3.5" height="3"/></g><rect x="13" y="14" width="3" height="8" fill="#1b3f8a"/></svg>
<div style="left:1091px;top:1072px;width:8px;height:3px;background:#7a8a80;border-radius:2px"></div>
<div style="left:1120px;top:1037px;width:38px;height:39px;background:#dff2ea;border-radius:4px;box-shadow:1px 0 0 #d0e8dc"></div>
<svg style="position:absolute;left:1127px;top:1044px;" width="26" height="24" viewBox="0 0 26 24"><ellipse cx="10" cy="9" rx="9" ry="8" fill="#2dc84d"/><path d="M4 15l-1 4 5-3z" fill="#2dc84d"/><circle cx="7" cy="7" r="1.2" fill="#1a5a28"/><circle cx="13" cy="7" r="1.2" fill="#1a5a28"/><ellipse cx="17" cy="15" rx="8" ry="7" fill="#e8e8e8" stroke="#f6f6f6"/><circle cx="14.5" cy="14" r="1" fill="#999"/><circle cx="19.5" cy="14" r="1" fill="#999"/></svg>
<div style="left:1131px;top:1073px;width:16px;height:3px;background:#1c6fd0;border-radius:2px"></div>
<svg style="position:absolute;left:1171px;top:1044px;" width="24" height="24" viewBox="0 0 24 24"><path d="M12 12L2.04 6.25A11.5 11.5 0 0 1 21.96 6.25z" fill="#db4437"/><path d="M12 12L21.96 6.25A11.5 11.5 0 0 1 12 23.5z" fill="#fcc934"/><path d="M12 12L12 23.5A11.5 11.5 0 0 1 2.04 6.25z" fill="#1e9e4a"/><circle cx="12" cy="12" r="5.6" fill="#fff"/><circle cx="12" cy="12" r="4.4" fill="#4a86e8"/></svg>
<div style="left:1179px;top:1072px;width:8px;height:3px;background:#7a8a80;border-radius:2px"></div>
<svg style="position:absolute;left:1215px;top:1044px;" width="24" height="24" viewBox="0 0 24 24"><rect x="0" y="0" width="24" height="24" rx="2" fill="#2f6ae8"/><path d="M6 4l6 8 6-8M12 12v9M7 13h10M7 17h10" fill="none" stroke="#fff" stroke-width="2.2"/></svg>
<div style="left:1223px;top:1072px;width:8px;height:3px;background:#7a8a80;border-radius:2px"></div>
<svg style="position:absolute;left:1259px;top:1044px;" width="24" height="23" viewBox="0 0 24 23"><rect x="9" y="2.5" width="14" height="18" fill="#fff" stroke="#1d6b3f"/><path d="M9 7h14M9 11h14M9 15h14M15 2.5v18M19 2.5v18" stroke="#1d6b3f" stroke-width="0.8"/><path d="M0 3l13-3v23L0 20z" fill="#1f7145"/><path d="M3.5 7l5 9M8.5 7l-5 9" stroke="#fff" stroke-width="1.8"/></svg>
<div style="left:1267px;top:1072px;width:8px;height:3px;background:#7a8a80;border-radius:2px"></div>
<svg style="position:absolute;left:1644px;top:1050px;" width="13" height="9" viewBox="0 0 13 9"><path d="M1 7.5l5.5-5.5 5.5 5.5" fill="none" stroke="#222" stroke-width="1.4"/></svg>
<svg style="position:absolute;left:1674px;top:1047px;" width="18" height="18" viewBox="0 0 18 18"><path d="M2 9a7 7 0 0 1 12-5M14 1v4h-4" fill="none" stroke="#222" stroke-width="1.3"/><path d="M3 15l-1.5-1.5L5 13" fill="none" stroke="#222" stroke-width="1.3"/><circle cx="13" cy="13" r="3.5" fill="#1c6fd0"/></svg>
<div class="t" style="left:1414px;width:600px;text-align:center;top:1046.5px;font-size:15px;line-height:19px;color:#222;font-weight:normal;">中</div>
<div class="t" style="left:1452px;width:600px;text-align:center;top:1046.5px;font-size:15px;line-height:19px;color:#222;font-weight:normal;">拼</div>
<svg style="position:absolute;left:1781px;top:1047px;" width="19" height="18" viewBox="0 0 19 18"><rect x="1" y="1.5" width="13" height="10" fill="none" stroke="#222" stroke-width="1.2"/><path d="M5 14.5h6M8 11.5v3" stroke="#222" stroke-width="1.2"/><rect x="13.5" y="1" width="4" height="5" fill="#c8eadb" stroke="#222"/><path d="M15.5 6v10" stroke="#222"/></svg>
<svg style="position:absolute;left:1805px;top:1048px;" width="20" height="16" viewBox="0 0 20 16"><path d="M1 5h3l4-3.5v13L4 11H1z" fill="none" stroke="#222" stroke-width="1.2"/><path d="M11 5c1 1.5 1 4.5 0 6M13.5 3c2 2.5 2 7.5 0 10M16 1.5c3 3.5 3 9.5 0 13" fill="none" stroke="#222" stroke-width="1.1"/></svg>
<div class="t" style="left:1820px;width:80px;text-align:right;top:1040px;font-size:12px;line-height:16px;color:#222">16:32</div>
<div class="t" style="left:1820px;width:80px;text-align:right;top:1056px;font-size:12px;line-height:16px;color:#222">2025/12/15</div>
<svg style="position:absolute;left:214px;top:402px;overflow:hidden" width="147" height="102" viewBox="0 0 147 102"><defs><filter id="bl1" x="0" y="0" width="1" height="1"><feGaussianBlur stdDeviation="0.6"/></filter><clipPath id="cp1"><rect width="147" height="102"/></clipPath></defs><g clip-path="url(#cp1)"><g filter="url(#bl1)"><rect x="0.0" y="0.0" width="147.0" height="102.0" fill="#4a545a" opacity="1"/><rect x="0.0" y="0.0" width="147.0" height="33.7" fill="#2c2e33" opacity="1"/><polygon points="66.2,0.0 117.6,0.0 102.9,20.4 51.4,28.6" fill="#7b8486" opacity="1"/><polygon points="117.6,0.0 147.0,0.0 147.0,12.2 110.2,18.4" fill="#5d676b" opacity="1"/><line x1="2.9" y1="22.4" x2="22.1" y2="2.0" stroke="#9a3434" stroke-width="1.5"/><line x1="36.8" y1="14.3" x2="70.6" y2="10.2" stroke="#9a3434" stroke-width="1.2"/><rect x="33.8" y="30.6" width="58.8" height="26.5" fill="#c4c8cc" opacity="1"/><rect x="66.2" y="36.7" width="22.0" height="16.3" fill="#e6eae4" opacity="1"/><rect x="0.0" y="28.6" width="17.6" height="32.6" fill="#bcc0c4" opacity="1"/><rect x="7.4" y="26.5" width="7.4" height="34.7" fill="#d6d8dc" opacity="1"/><rect x="7.4" y="46.9" width="7.4" height="5.1" fill="#84bb4c" opacity="1"/><rect x="17.6" y="12.2" width="16.2" height="57.1" fill="#d2d4d8" opacity="1"/><rect x="26.5" y="12.2" width="7.4" height="57.1" fill="#b8bcc0" opacity="1"/><rect x="17.6" y="41.8" width="16.2" height="10.2" fill="#78b540" opacity="1"/><rect x="19.1" y="59.2" width="2.9" height="10.2" fill="#222" opacity="1"/><rect x="32.3" y="59.2" width="2.2" height="10.2" fill="#222" opacity="1"/><rect x="44.1" y="35.7" width="4.4" height="20.4" fill="#e8e8ea" opacity="1"/><rect x="61.7" y="37.7" width="2.9" height="18.4" fill="#e8e8ea" opacity="1"/><rect x="105.8" y="30.6" width="41.2" height="30.6" fill="#dde0e6" opacity="1"/><rect x="105.8" y="51.0" width="41.2" height="2.0" fill="#98c46c" opacity="1"/><rect x="92.6" y="22.4" width="13.2" height="40.8" fill="#e2e4e6" opacity="1"/><rect x="92.6" y="44.9" width="13.2" height="7.1" fill="#7db944" opacity="1"/><rect x="35.3" y="50.0" width="19.1" height="11.2" fill="#e6e6e8" opacity="1"/><rect x="38.2" y="51.0" width="13.2" height="4.1" fill="#5a6068" opacity="1"/><rect x="64.7" y="50.0" width="27.9" height="14.3" fill="#ececee" opacity="1"/><rect x="69.1" y="51.0" width="16.2" height="5.1" fill="#6a7078" opacity="1"/><rect x="0.0" y="51.0" width="7.4" height="12.2" fill="#e8e8e8" opacity="1"/><polygon points="0.0,61.2 147.0,59.2 147.0,102.0 0.0,102.0" fill="#38464a" opacity="1"/><polygon points="44.1,63.2 97.0,63.2 105.8,102.0 41.2,102.0" fill="#596769" opacity="1"/><polygon points="58.8,66.3 80.9,66.3 88.2,96.9 61.7,96.9" fill="#7c8a8a" opacity="1"/><line x1="82.3" y1="102.0" x2="147.0" y2="80.6" stroke="#e0e4e4" stroke-width="1.5"/><line x1="8.8" y1="63.2" x2="17.6" y2="71.4" stroke="#d8d8d8" stroke-width="1"/></g><rect x="2.5" y="69.36" width="33" height="9" rx="1" fill="#e8eef8" opacity="0.92"/><rect x="2.5" y="69.36" width="12" height="9" rx="1" fill="#f5c21b"/><text x="3.0" y="76.36" font-family="Liberation Sans" font-weight="bold" font-size="5.5" fill="#222">打卡</text><text x="16.0" y="76.86" font-family="Liberation Sans" font-size="7.5" fill="#1a3a8a">16:21</text><rect x="1.5" y="81.6" width="1" height="15.3" fill="#f5c21b"/><rect x="5" y="82.1" width="76.4" height="3" fill="#fff" opacity="0.4"/><rect x="5" y="88.7" width="25.0" height="3" fill="#fff" opacity="0.4"/><rect x="5" y="95.4" width="32.3" height="3" fill="#fff" opacity="0.4"/><rect x="133" y="97" width="12" height="3" fill="#fff" opacity="0.5"/></g></svg>
<svg style="position:absolute;left:395px;top:401px;overflow:hidden" width="142" height="101" viewBox="0 0 142 101"><defs><filter id="bl2" x="0" y="0" width="1" height="1"><feGaussianBlur stdDeviation="0.6"/></filter><clipPath id="cp2"><rect width="142" height="101"/></clipPath></defs><g clip-path="url(#cp2)"><g filter="url(#bl2)"><rect x="0.0" y="0.0" width="142.0" height="101.0" fill="#c2b29e" opacity="1"/><rect x="0.0" y="0.0" width="142.0" height="10.1" fill="#d4c8b8" opacity="1"/><rect x="0.0" y="10.1" width="32.7" height="64.6" fill="#e8e8e8" opacity="1"/><rect x="0.4" y="13.1" width="4.6" height="29.3" fill="#e8457a" opacity="1"/><rect x="0.4" y="43.4" width="4.6" height="29.3" fill="#f2c42a" opacity="1"/><rect x="5.9" y="13.1" width="4.6" height="29.3" fill="#1aa3bc" opacity="1"/><rect x="5.9" y="43.4" width="4.6" height="29.3" fill="#e8457a" opacity="1"/><rect x="11.3" y="13.1" width="4.6" height="29.3" fill="#f2c42a" opacity="1"/><rect x="11.3" y="43.4" width="4.6" height="29.3" fill="#1aa3bc" opacity="1"/><rect x="16.8" y="13.1" width="4.6" height="29.3" fill="#e8457a" opacity="1"/><rect x="16.8" y="43.4" width="4.6" height="29.3" fill="#f2c42a" opacity="1"/><rect x="22.2" y="13.1" width="4.6" height="29.3" fill="#1aa3bc" opacity="1"/><rect x="22.2" y="43.4" width="4.6" height="29.3" fill="#e8457a" opacity="1"/><rect x="27.6" y="13.1" width="4.6" height="29.3" fill="#f2c42a" opacity="1"/><rect x="27.6" y="43.4" width="4.6" height="29.3" fill="#1aa3bc" opacity="1"/><rect x="32.7" y="18.2" width="19.9" height="42.4" fill="#e8e8e8" opacity="1"/><rect x="33.1" y="20.2" width="5.8" height="18.7" fill="#e8457a" opacity="1"/><rect x="33.1" y="39.9" width="5.8" height="18.7" fill="#f2c42a" opacity="1"/><rect x="39.7" y="20.2" width="5.8" height="18.7" fill="#1aa3bc" opacity="1"/><rect x="39.7" y="39.9" width="5.8" height="18.7" fill="#e8457a" opacity="1"/><rect x="46.3" y="20.2" width="5.8" height="18.7" fill="#f2c42a" opacity="1"/><rect x="46.3" y="39.9" width="5.8" height="18.7" fill="#1aa3bc" opacity="1"/><rect x="52.5" y="8.1" width="18.5" height="54.5" fill="#cdbfaa" opacity="1"/><rect x="71.0" y="19.2" width="52.5" height="45.5" fill="#eeeeee" opacity="1"/><rect x="71.4" y="21.2" width="6.5" height="20.2" fill="#e8457a" opacity="1"/><rect x="71.4" y="42.4" width="6.5" height="20.2" fill="#f2c42a" opacity="1"/><rect x="78.7" y="21.2" width="6.5" height="20.2" fill="#1aa3bc" opacity="1"/><rect x="78.7" y="42.4" width="6.5" height="20.2" fill="#e8457a" opacity="1"/><rect x="86.0" y="21.2" width="6.5" height="20.2" fill="#f2c42a" opacity="1"/><rect x="86.0" y="42.4" width="6.5" height="20.2" fill="#1aa3bc" opacity="1"/><rect x="93.3" y="21.2" width="6.5" height="20.2" fill="#e8457a" opacity="1"/><rect x="93.3" y="42.4" width="6.5" height="20.2" fill="#f2c42a" opacity="1"/><rect x="100.6" y="21.2" width="6.5" height="20.2" fill="#1aa3bc" opacity="1"/><rect x="100.6" y="42.4" width="6.5" height="20.2" fill="#e8457a" opacity="1"/><rect x="107.9" y="21.2" width="6.5" height="20.2" fill="#f2c42a" opacity="1"/><rect x="107.9" y="42.4" width="6.5" height="20.2" fill="#1aa3bc" opacity="1"/><rect x="115.2" y="21.2" width="6.5" height="20.2" fill="#e8457a" opacity="1"/><rect x="115.2" y="42.4" width="6.5" height="20.2" fill="#f2c42a" opacity="1"/><rect x="116.4" y="20.2" width="8.5" height="22.2" fill="#e8c8c8" opacity="1"/><rect x="119.3" y="8.1" width="5.7" height="12.1" fill="#3a8a5a" opacity="1"/><polygon points="0.0,76.8 32.7,62.6 125.0,62.6 125.0,101.0 0.0,101.0" fill="#a9a5a2" opacity="1"/><rect x="48.3" y="52.5" width="17.0" height="6.1" fill="#dcb474" opacity="1"/><rect x="49.7" y="58.6" width="2.8" height="9.1" fill="#c8a060" opacity="1"/><rect x="61.1" y="58.6" width="2.8" height="9.1" fill="#c8a060" opacity="1"/><rect x="106.5" y="64.6" width="12.8" height="26.3" fill="#1e1e1e" opacity="1"/><rect x="125.0" y="0.0" width="14.2" height="92.9" fill="#cdbfa8" opacity="1"/><rect x="139.2" y="0.0" width="2.8" height="92.9" fill="#b4a690" opacity="1"/><rect x="125.0" y="55.6" width="17.0" height="25.2" fill="#e0d8c8" opacity="1"/></g><rect x="2.5" y="68.68" width="33" height="9" rx="1" fill="#e8eef8" opacity="0.92"/><rect x="2.5" y="68.68" width="12" height="9" rx="1" fill="#f5c21b"/><text x="3.0" y="75.68" font-family="Liberation Sans" font-weight="bold" font-size="5.5" fill="#222">打卡</text><text x="16.0" y="76.18" font-family="Liberation Sans" font-size="7.5" fill="#1a3a8a">16:20</text><rect x="1.5" y="80.8" width="1" height="15.1" fill="#f5c21b"/><rect x="5" y="81.3" width="73.8" height="3" fill="#fff" opacity="0.4"/><rect x="5" y="87.9" width="24.1" height="3" fill="#fff" opacity="0.4"/><rect x="5" y="94.4" width="31.2" height="3" fill="#fff" opacity="0.4"/><rect x="128" y="96" width="12" height="3" fill="#fff" opacity="0.5"/></g></svg>
<svg style="position:absolute;left:394px;top:541px;overflow:hidden" width="147" height="102" viewBox="0 0 147 102"><defs><filter id="bl3" x="0" y="0" width="1" height="1"><feGaussianBlur stdDeviation="0.6"/></filter><clipPath id="cp3"><rect width="147" height="102"/></clipPath></defs><g clip-path="url(#cp3)"><g filter="url(#bl3)"><rect x="0.0" y="0.0" width="147.0" height="102.0" fill="#e2e2e4" opacity="1"/><line x1="14.7" y1="0.0" x2="73.5" y2="22.4" stroke="#2a2a2a" stroke-width="1.3"/><line x1="0.0" y1="30.6" x2="29.4" y2="38.8" stroke="#555" stroke-width="0.8"/><rect x="0.0" y="34.7" width="29.4" height="16.3" fill="#c6c2be" opacity="1"/><rect x="0.0" y="51.0" width="29.4" height="22.4" fill="#d8dcd8" opacity="1"/><polygon points="39.7,36.7 136.7,5.1 136.7,83.6 39.7,74.5" fill="#c8aa7c" opacity="1"/><rect x="29.4" y="38.8" width="10.3" height="35.7" fill="#e6e6e6" opacity="1"/><rect x="52.9" y="30.6" width="5.9" height="43.9" fill="#e8e8e8" opacity="1"/><rect x="60.3" y="26.5" width="14.7" height="51.0" fill="#e6e4e2" opacity="1"/><rect x="63.2" y="53.0" width="10.3" height="22.4" fill="#c8a878" opacity="1"/><rect x="66.2" y="61.2" width="5.9" height="7.1" fill="#2a2a2a" opacity="1"/><rect x="114.7" y="8.2" width="8.8" height="73.4" fill="#e8e6e6" opacity="1"/><rect x="129.4" y="0.0" width="17.6" height="83.6" fill="#e4e2e2" opacity="1"/><rect x="39.7" y="51.0" width="13.2" height="22.4" fill="#8a6c48" opacity="1"/><rect x="44.1" y="53.0" width="5.9" height="20.4" fill="#3a3028" opacity="1"/><rect x="79.4" y="41.8" width="32.3" height="38.8" fill="#b89468" opacity="1"/><rect x="82.3" y="44.9" width="11.8" height="33.7" fill="#2a2622" opacity="1"/><rect x="97.0" y="44.9" width="11.8" height="35.7" fill="#262220" opacity="1"/><polygon points="0.0,73.4 39.7,73.4 139.7,83.6 147.0,86.7 147.0,102.0 0.0,102.0" fill="#c6beb2" opacity="1"/><polygon points="0.0,85.7 41.2,81.6 110.2,102.0 0.0,102.0" fill="#8e8e90" opacity="1"/></g><rect x="2.5" y="69.36" width="33" height="9" rx="1" fill="#e8eef8" opacity="0.92"/><rect x="2.5" y="69.36" width="12" height="9" rx="1" fill="#f5c21b"/><text x="3.0" y="76.36" font-family="Liberation Sans" font-weight="bold" font-size="5.5" fill="#222">打卡</text><text x="16.0" y="76.86" font-family="Liberation Sans" font-size="7.5" fill="#1a3a8a">16:12</text><rect x="1.5" y="81.6" width="1" height="15.3" fill="#f5c21b"/><rect x="5" y="82.1" width="76.4" height="3" fill="#fff" opacity="0.4"/><rect x="5" y="88.7" width="25.0" height="3" fill="#fff" opacity="0.4"/><rect x="5" y="95.4" width="32.3" height="3" fill="#fff" opacity="0.4"/><rect x="133" y="97" width="12" height="3" fill="#fff" opacity="0.5"/></g></svg>
<svg style="position:absolute;left:924px;top:258px;overflow:hidden" width="143" height="96" viewBox="0 0 143 96"><defs><filter id="bl4" x="0" y="0" width="1" height="1"><feGaussianBlur stdDeviation="0.6"/></filter><clipPath id="cp4"><rect width="143" height="96"/></clipPath></defs><g clip-path="url(#cp4)"><g filter="url(#bl4)"><rect x="0.0" y="0.0" width="143.0" height="96.0" fill="#dde0e4" opacity="1"/><rect x="0.0" y="0.0" width="124.4" height="30.7" fill="#35393e" opacity="1"/><polygon points="45.8,0.0 68.6,0.0 74.4,19.2 54.3,21.1" fill="#aab2b8" opacity="1"/><rect x="78.7" y="1.9" width="42.9" height="17.3" fill="#8a9296" opacity="1"/><rect x="21.4" y="19.2" width="103.0" height="2.9" fill="#1a1a1a" opacity="1"/><line x1="8.6" y1="9.6" x2="22.9" y2="16.3" stroke="#f0f4f8" stroke-width="1.8"/><line x1="72.9" y1="4.8" x2="77.2" y2="13.4" stroke="#f0f4f8" stroke-width="1.8"/><rect x="0.0" y="30.7" width="31.5" height="36.5" fill="#cfd3d8" opacity="1"/><rect x="0.0" y="46.1" width="14.3" height="6.7" fill="#3a6ab0" opacity="1"/><rect x="0.0" y="40.3" width="2.9" height="26.9" fill="#c03030" opacity="1"/><rect x="17.2" y="28.8" width="2.1" height="36.5" fill="#222" opacity="1"/><rect x="24.3" y="34.6" width="2.1" height="30.7" fill="#222" opacity="1"/><rect x="97.2" y="21.1" width="11.4" height="34.6" fill="#e6e8ea" opacity="1"/><rect x="50.0" y="38.4" width="7.2" height="15.4" fill="#eaeaea" opacity="1"/><rect x="32.9" y="51.8" width="57.2" height="3.8" fill="#3070b8" opacity="1"/><rect x="80.1" y="45.1" width="5.7" height="5.8" fill="#d02020" opacity="1"/><rect x="25.7" y="54.7" width="82.9" height="10.6" fill="#cfccc4" opacity="1"/><polygon points="0.0,65.3 108.7,65.3 124.4,96.0 0.0,96.0" fill="#4e585e" opacity="1"/><polygon points="108.7,52.8 124.4,59.5 124.4,78.7 108.7,65.3" fill="#3a3e40" opacity="1"/><line x1="38.6" y1="91.2" x2="64.4" y2="69.1" stroke="#c8d0d0" stroke-width="1.2"/><line x1="103.0" y1="69.1" x2="121.5" y2="96.0" stroke="#c8d0d0" stroke-width="1.2"/><rect x="124.4" y="0.0" width="18.6" height="96.0" fill="#e4e6e2" opacity="1"/><rect x="125.8" y="28.8" width="17.2" height="30.7" fill="#b8dcb0" opacity="1"/><rect x="128.7" y="69.1" width="5.0" height="26.9" fill="#1a1a1a" opacity="1"/><rect x="128.7" y="71.0" width="5.0" height="5.8" fill="#f0c020" opacity="1"/><rect x="128.7" y="82.6" width="5.0" height="3.8" fill="#f0c020" opacity="1"/></g><rect x="2.5" y="65.28" width="33" height="9" rx="1" fill="#e8eef8" opacity="0.92"/><rect x="2.5" y="65.28" width="12" height="9" rx="1" fill="#f5c21b"/><text x="3.0" y="72.28" font-family="Liberation Sans" font-weight="bold" font-size="5.5" fill="#222">打卡</text><text x="16.0" y="72.78" font-family="Liberation Sans" font-size="7.5" fill="#1a3a8a">16:22</text><rect x="1.5" y="76.8" width="1" height="14.4" fill="#f5c21b"/><rect x="5" y="77.3" width="74.4" height="3" fill="#fff" opacity="0.4"/><rect x="5" y="83.5" width="24.3" height="3" fill="#fff" opacity="0.4"/><rect x="5" y="89.8" width="31.5" height="3" fill="#fff" opacity="0.4"/><rect x="129" y="91" width="12" height="3" fill="#fff" opacity="0.5"/></g></svg>
<svg style="position:absolute;left:1103px;top:255px;overflow:hidden" width="145" height="98" viewBox="0 0 145 98"><defs><filter id="bl5" x="0" y="0" width="1" height="1"><feGaussianBlur stdDeviation="0.6"/></filter><clipPath id="cp5"><rect width="145" height="98"/></clipPath></defs><g clip-path="url(#cp5)"><g filter="url(#bl5)"><rect x="0.0" y="0.0" width="145.0" height="98.0" fill="#d8dada" opacity="1"/><rect x="0.0" y="0.0" width="5.8" height="98.0" fill="#b8bcbc" opacity="1"/><rect x="5.8" y="0.0" width="60.9" height="23.5" fill="#c4c8c8" opacity="1"/><polygon points="24.7,21.6 47.9,0.0 60.9,0.0 39.2,24.5" fill="#2e5254" opacity="1"/><rect x="5.8" y="26.5" width="37.7" height="12.7" fill="#a8c4c8" opacity="1"/><rect x="5.8" y="39.2" width="37.7" height="15.7" fill="#e0e2e2" opacity="1"/><rect x="43.5" y="2.9" width="23.2" height="58.8" fill="#dcdede" opacity="1"/><rect x="58.0" y="4.9" width="2.9" height="53.9" fill="#303838" opacity="1"/><rect x="123.2" y="0.0" width="21.8" height="37.2" fill="#b0c8cc" opacity="1"/><rect x="123.2" y="9.8" width="21.8" height="14.7" fill="#e4e6e6" opacity="1"/><rect x="123.2" y="37.2" width="21.8" height="16.7" fill="#d0ccc6" opacity="1"/><rect x="5.8" y="54.9" width="60.9" height="43.1" fill="#d2d4d4" opacity="1"/><rect x="123.2" y="53.9" width="21.8" height="44.1" fill="#e0e0e0" opacity="1"/><rect x="50.8" y="63.7" width="14.5" height="6.9" fill="#3a3a3a" opacity="1"/><rect x="66.7" y="0.0" width="26.1" height="88.2" fill="#c0c4c4" opacity="1"/><rect x="92.8" y="0.0" width="30.4" height="90.2" fill="#dcdedd" opacity="1"/><rect x="66.7" y="70.6" width="26.1" height="15.7" fill="#9a9e9c" opacity="1"/></g><rect x="2.5" y="66.64" width="33" height="9" rx="1" fill="#e8eef8" opacity="0.92"/><rect x="2.5" y="66.64" width="12" height="9" rx="1" fill="#f5c21b"/><text x="3.0" y="73.64" font-family="Liberation Sans" font-weight="bold" font-size="5.5" fill="#222">打卡</text><text x="16.0" y="74.14" font-family="Liberation Sans" font-size="7.5" fill="#1a3a8a">16:18</text><rect x="1.5" y="78.4" width="1" height="14.7" fill="#f5c21b"/><rect x="5" y="78.9" width="75.4" height="3" fill="#fff" opacity="0.4"/><rect x="5" y="85.3" width="24.7" height="3" fill="#fff" opacity="0.4"/><rect x="5" y="91.6" width="31.9" height="3" fill="#fff" opacity="0.4"/><rect x="131" y="93" width="12" height="3" fill="#fff" opacity="0.5"/></g></svg>
<svg style="position:absolute;left:1284px;top:260px;overflow:hidden" width="134" height="90" viewBox="0 0 134 90"><defs><filter id="bl6" x="0" y="0" width="1" height="1"><feGaussianBlur stdDeviation="0.6"/></filter><clipPath id="cp6"><rect width="134" height="90"/></clipPath></defs><g clip-path="url(#cp6)"><g filter="url(#bl6)"><rect x="0.0" y="0.0" width="134.0" height="90.0" fill="#d0d6e4" opacity="1"/><rect x="0.0" y="0.0" width="17.4" height="70.2" fill="#8794a4" opacity="1"/><rect x="17.4" y="0.0" width="17.4" height="72.0" fill="#aeb8c6" opacity="1"/><rect x="34.8" y="0.0" width="48.2" height="27.0" fill="#1c2434" opacity="1"/><line x1="60.3" y1="19.8" x2="69.7" y2="9.0" stroke="#f0f4ff" stroke-width="2"/><rect x="34.8" y="27.0" width="25.5" height="45.0" fill="#c4cad4" opacity="1"/><rect x="37.5" y="45.0" width="13.4" height="27.0" fill="#ccd0d8" opacity="1"/><rect x="44.2" y="41.4" width="4.0" height="2.7" fill="#40c060" opacity="1"/><polygon points="77.7,22.5 134.0,1.8 134.0,90.0 77.7,79.2" fill="#d6dcea" opacity="1"/><line x1="57.6" y1="22.5" x2="57.6" y2="77.4" stroke="#9a9a9a" stroke-width="0.8"/><line x1="75.0" y1="22.5" x2="75.0" y2="77.4" stroke="#9a9a9a" stroke-width="0.8"/><line x1="57.6" y1="45.0" x2="75.0" y2="45.0" stroke="#9a9a9a" stroke-width="0.8"/><line x1="57.6" y1="59.4" x2="75.0" y2="59.4" stroke="#9a9a9a" stroke-width="0.8"/><polygon points="53.6,55.8 77.7,55.8 109.9,59.4 109.9,64.8 77.7,61.2 53.6,61.2" fill="#a8d878" opacity="1"/><polygon points="0.0,70.2 77.7,72.0 120.6,90.0 0.0,90.0" fill="#5a6270" opacity="1"/><rect x="111.2" y="34.2" width="18.8" height="55.8" fill="#e0e2e8" opacity="1"/><line x1="111.2" y1="36.0" x2="111.2" y2="90.0" stroke="#888" stroke-width="0.8"/><rect x="93.8" y="40.5" width="2.7" height="4.5" fill="#c03030" opacity="1"/></g><rect x="2.5" y="61.2" width="33" height="9" rx="1" fill="#e8eef8" opacity="0.92"/><rect x="2.5" y="61.2" width="12" height="9" rx="1" fill="#f5c21b"/><text x="3.0" y="68.2" font-family="Liberation Sans" font-weight="bold" font-size="5.5" fill="#222">打卡</text><text x="16.0" y="68.7" font-family="Liberation Sans" font-size="7.5" fill="#1a3a8a">16:22</text><rect x="1.5" y="72.0" width="1" height="13.5" fill="#f5c21b"/><rect x="5" y="72.5" width="69.7" height="3" fill="#fff" opacity="0.4"/><rect x="5" y="78.3" width="22.8" height="3" fill="#fff" opacity="0.4"/><rect x="5" y="84.2" width="29.5" height="3" fill="#fff" opacity="0.4"/><rect x="120" y="85" width="12" height="3" fill="#fff" opacity="0.5"/></g></svg>
<svg style="position:absolute;left:922px;top:408px;overflow:hidden" width="143" height="95" viewBox="0 0 143 95"><defs><filter id="bl7" x="0" y="0" width="1" height="1"><feGaussianBlur stdDeviation="0.6"/></filter><clipPath id="cp7"><rect width="143" height="95"/></clipPath></defs><g clip-path="url(#cp7)"><g filter="url(#bl7)"><rect x="0.0" y="0.0" width="143.0" height="95.0" fill="#8a8a8a" opacity="1"/><polygon points="0.0,0.0 143.0,0.0 143.0,13.3 50.0,31.4 0.0,30.4" fill="#e6e6e4" opacity="1"/><rect x="0.0" y="19.0" width="31.5" height="49.4" fill="#2c2e2e" opacity="1"/><rect x="5.7" y="23.8" width="2.9" height="42.7" fill="#c8a860" opacity="1"/><rect x="31.5" y="28.5" width="21.4" height="15.2" fill="#d8cbb4" opacity="1"/><polygon points="50.0,31.4 143.0,13.3 143.0,49.4 52.9,47.5" fill="#c4cccc" opacity="1"/><rect x="103.0" y="23.8" width="17.2" height="19.0" fill="#505858" opacity="1"/><rect x="123.0" y="20.9" width="20.0" height="21.9" fill="#505858" opacity="1"/><rect x="47.2" y="28.5" width="5.7" height="19.0" fill="#c8a470" opacity="1"/><rect x="77.2" y="19.0" width="15.7" height="33.2" fill="#d0ac78" opacity="1"/><polygon points="31.5,44.6 143.0,47.5 143.0,95.0 28.6,95.0" fill="#8a8a8a" opacity="1"/><polygon points="71.5,52.3 143.0,52.3 143.0,87.4 85.8,58.9" fill="#c8b088" opacity="1"/><rect x="74.4" y="52.3" width="28.6" height="4.7" fill="#2c3434" opacity="1"/><rect x="85.8" y="58.9" width="35.8" height="5.7" fill="#2c3434" opacity="1"/><rect x="107.2" y="64.6" width="35.8" height="7.6" fill="#2c3434" opacity="1"/><line x1="97.2" y1="28.5" x2="103.0" y2="55.1" stroke="#2c3434" stroke-width="1.5"/><line x1="114.4" y1="28.5" x2="120.1" y2="62.7" stroke="#2c3434" stroke-width="1.5"/><line x1="135.8" y1="33.2" x2="143.0" y2="66.5" stroke="#2c3434" stroke-width="1.5"/><polygon points="0.0,58.9 24.3,57.0 24.3,95.0 0.0,95.0" fill="#3a6a50" opacity="1"/><polygon points="24.3,57.0 32.9,57.0 40.0,95.0 24.3,95.0" fill="#c8aa40" opacity="1"/><rect x="40.0" y="64.6" width="35.8" height="3.8" fill="#1c1c1c" opacity="1"/><rect x="45.8" y="74.1" width="51.5" height="5.7" fill="#1c1c1c" opacity="1"/><line x1="57.2" y1="68.4" x2="42.9" y2="87.4" stroke="#1c1c1c" stroke-width="1.6"/><line x1="85.8" y1="79.8" x2="103.0" y2="95.0" stroke="#1c1c1c" stroke-width="1.6"/><line x1="64.4" y1="79.8" x2="54.3" y2="95.0" stroke="#1c1c1c" stroke-width="1.6"/></g><rect x="2.5" y="64.60000000000001" width="33" height="9" rx="1" fill="#e8eef8" opacity="0.92"/><rect x="2.5" y="64.60000000000001" width="12" height="9" rx="1" fill="#f5c21b"/><text x="3.0" y="71.60000000000001" font-family="Liberation Sans" font-weight="bold" font-size="5.5" fill="#222">打卡</text><text x="16.0" y="72.10000000000001" font-family="Liberation Sans" font-size="7.5" fill="#1a3a8a">16:14</text><rect x="1.5" y="76.0" width="1" height="14.2" fill="#f5c21b"/><rect x="5" y="76.5" width="74.4" height="3" fill="#fff" opacity="0.4"/><rect x="5" y="82.7" width="24.3" height="3" fill="#fff" opacity="0.4"/><rect x="5" y="88.8" width="31.5" height="3" fill="#fff" opacity="0.4"/><rect x="129" y="90" width="12" height="3" fill="#fff" opacity="0.5"/></g></svg>
<svg style="position:absolute;left:1104px;top:405px;overflow:hidden" width="144" height="98" viewBox="0 0 144 98"><defs><filter id="bl8" x="0" y="0" width="1" height="1"><feGaussianBlur stdDeviation="0.6"/></filter><clipPath id="cp8"><rect width="144" height="98"/></clipPath></defs><g clip-path="url(#cp8)"><g filter="url(#bl8)"><rect x="0.0" y="0.0" width="144.0" height="98.0" fill="#3c2a1e" opacity="1"/><rect x="0.0" y="0.0" width="28.8" height="68.6" fill="#6a4a32" opacity="1"/><rect x="28.8" y="0.0" width="34.6" height="51.0" fill="#dcc8ac" opacity="1"/><rect x="40.3" y="2.0" width="20.2" height="47.0" fill="#e8d8c0" opacity="1"/><line x1="36.0" y1="0.0" x2="36.0" y2="58.8" stroke="#b8a488" stroke-width="1"/><polygon points="63.4,0.0 144.0,0.0 144.0,98.0 89.3,70.6 63.4,51.0" fill="#3e2818" opacity="1"/><polygon points="63.4,19.6 100.8,29.4 100.8,78.4 63.4,58.8" fill="#5a3a24" opacity="1"/><line x1="63.4" y1="32.3" x2="144.0" y2="47.0" stroke="#1e140c" stroke-width="1.2"/><polygon points="0.0,70.6 31.7,51.0 63.4,51.0 89.3,70.6 144.0,96.0 144.0,98.0 0.0,98.0" fill="#3a3632" opacity="1"/><polygon points="50.4,80.4 100.8,76.4 129.6,98.0 43.2,98.0" fill="#4a5a50" opacity="0.8"/><rect x="51.8" y="36.3" width="20.2" height="22.5" fill="#e4e4e4" opacity="1"/><rect x="63.4" y="42.1" width="27.4" height="32.3" fill="#ececec" opacity="1"/><rect x="63.4" y="42.1" width="27.4" height="3.9" fill="#d8c8b0" opacity="1"/><rect x="99.4" y="58.8" width="11.5" height="9.8" fill="#a8c0b0" opacity="1"/></g><rect x="2.5" y="66.64" width="33" height="9" rx="1" fill="#e8eef8" opacity="0.92"/><rect x="2.5" y="66.64" width="12" height="9" rx="1" fill="#f5c21b"/><text x="3.0" y="73.64" font-family="Liberation Sans" font-weight="bold" font-size="5.5" fill="#222">打卡</text><text x="16.0" y="74.14" font-family="Liberation Sans" font-size="7.5" fill="#1a3a8a">16:16</text><rect x="1.5" y="78.4" width="1" height="14.7" fill="#f5c21b"/><rect x="5" y="78.9" width="74.9" height="3" fill="#fff" opacity="0.4"/><rect x="5" y="85.3" width="24.5" height="3" fill="#fff" opacity="0.4"/><rect x="5" y="91.6" width="31.7" height="3" fill="#fff" opacity="0.4"/><rect x="130" y="93" width="12" height="3" fill="#fff" opacity="0.5"/></g></svg>
<svg style="position:absolute;left:1277px;top:408px;overflow:hidden" width="145" height="96" viewBox="0 0 145 96"><defs><filter id="bl9" x="0" y="0" width="1" height="1"><feGaussianBlur stdDeviation="0.6"/></filter><clipPath id="cp9"><rect width="145" height="96"/></clipPath></defs><g clip-path="url(#cp9)"><g filter="url(#bl9)"><rect x="0.0" y="0.0" width="145.0" height="96.0" fill="#d0d2d4" opacity="1"/><rect x="0.0" y="0.0" width="145.0" height="28.8" fill="#d6d4cc" opacity="1"/><rect x="62.4" y="1.9" width="17.4" height="3.8" fill="#fafafa" opacity="1"/><rect x="120.3" y="2.9" width="21.8" height="3.8" fill="#fafafa" opacity="1"/><rect x="87.0" y="17.3" width="14.5" height="2.9" fill="#fafafa" opacity="1"/><rect x="0.0" y="1.9" width="69.6" height="65.3" fill="#e6e6e6" opacity="1"/><rect x="0.0" y="5.8" width="24.7" height="57.6" fill="#1e1e1e" opacity="1"/><rect x="4.3" y="9.6" width="16.0" height="43.2" fill="#f0f0f0" opacity="1"/><rect x="27.6" y="12.5" width="36.2" height="57.6" fill="#262626" opacity="1"/><rect x="29.0" y="14.4" width="14.5" height="52.8" fill="#5aaed6" opacity="1"/><rect x="45.0" y="16.3" width="8.7" height="43.2" fill="#9ac8dc" opacity="1"/><rect x="55.1" y="18.2" width="7.2" height="39.4" fill="#c4d4dc" opacity="1"/><rect x="69.6" y="25.9" width="53.6" height="18.2" fill="#60b4e0" opacity="1"/><rect x="123.2" y="24.0" width="21.8" height="20.2" fill="#c8b090" opacity="1"/><rect x="89.9" y="28.8" width="7.3" height="14.4" fill="#e8e8e8" opacity="1"/><rect x="65.2" y="44.2" width="79.8" height="42.2" fill="#2a2a2a" opacity="1"/><rect x="72.5" y="46.1" width="58.0" height="9.6" fill="#c8bca8" opacity="1"/><polygon points="75.4,55.7 145.0,59.5 145.0,65.3 75.4,61.4" fill="#ddd6c8" opacity="1"/><rect x="126.2" y="48.0" width="18.9" height="15.4" fill="#1a1a1a" opacity="1"/><rect x="58.0" y="46.1" width="8.7" height="30.7" fill="#e8e8e8" opacity="1"/><rect x="0.0" y="52.8" width="29.0" height="14.4" fill="#b8b0a0" opacity="1"/><polygon points="0.0,67.2 36.2,67.2 116.0,88.3 116.0,96.0 0.0,96.0" fill="#e2ded6" opacity="1"/><rect x="71.0" y="76.8" width="30.4" height="9.6" fill="#e6e2d4" opacity="1"/><polygon points="118.9,74.9 145.0,69.1 145.0,96.0 123.2,96.0" fill="#d8d0c0" opacity="1"/><polygon points="108.8,78.7 130.5,76.8 137.8,91.2 116.0,94.1" fill="#f0f0f0" opacity="1"/></g><rect x="2.5" y="65.28" width="33" height="9" rx="1" fill="#e8eef8" opacity="0.92"/><rect x="2.5" y="65.28" width="12" height="9" rx="1" fill="#f5c21b"/><text x="3.0" y="72.28" font-family="Liberation Sans" font-weight="bold" font-size="5.5" fill="#222">打卡</text><text x="16.0" y="72.78" font-family="Liberation Sans" font-size="7.5" fill="#1a3a8a">16:16</text><rect x="1.5" y="76.8" width="1" height="14.4" fill="#f5c21b"/><rect x="5" y="77.3" width="75.4" height="3" fill="#fff" opacity="0.4"/><rect x="5" y="83.5" width="24.7" height="3" fill="#fff" opacity="0.4"/><rect x="5" y="89.8" width="31.9" height="3" fill="#fff" opacity="0.4"/><rect x="131" y="91" width="12" height="3" fill="#fff" opacity="0.5"/></g></svg>
</body></html>
